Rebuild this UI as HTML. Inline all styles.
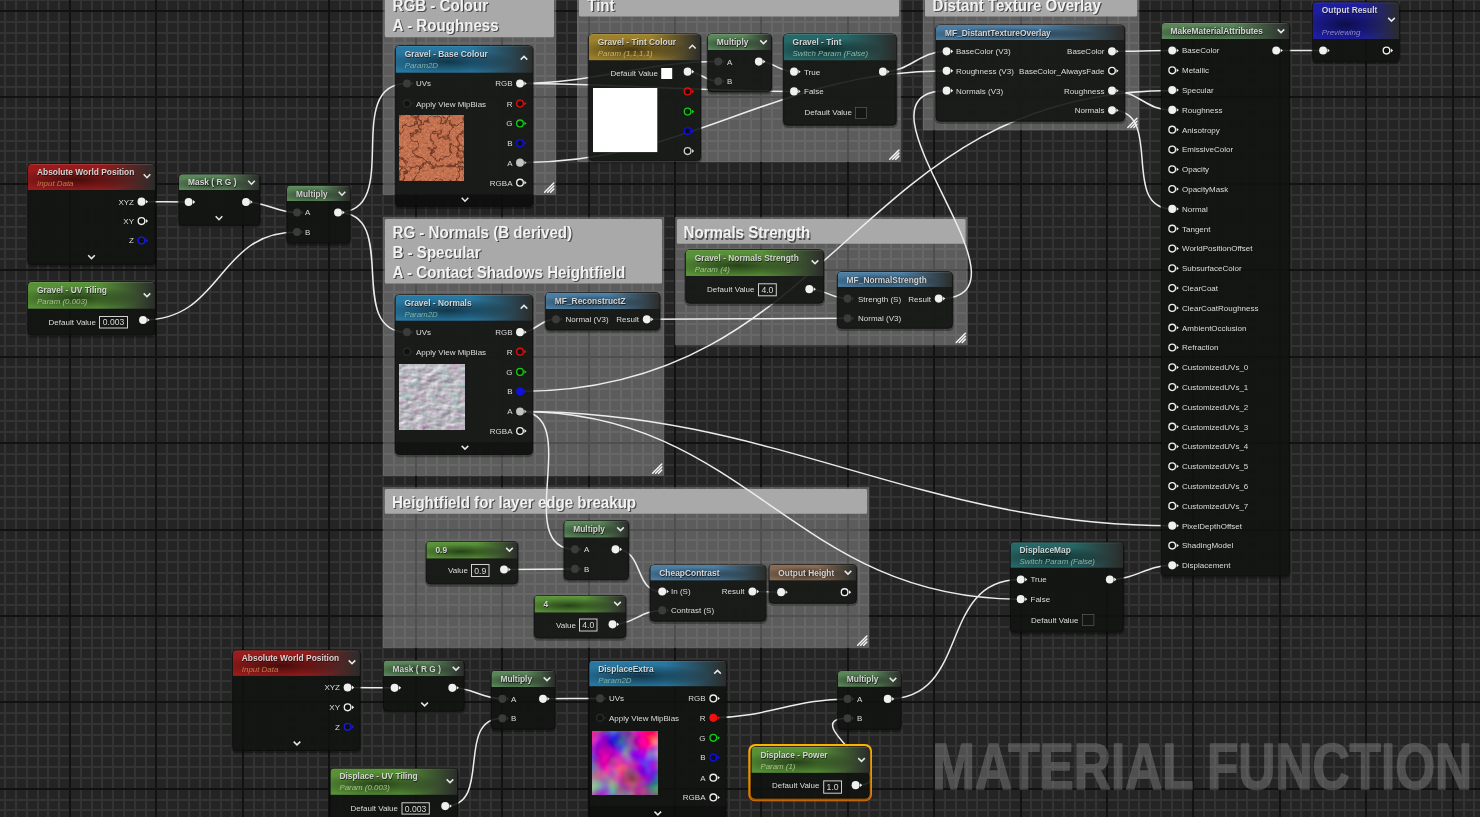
<!DOCTYPE html>
<html><head><meta charset="utf-8"><title>Material Function</title>
<style>html,body{margin:0;padding:0;background:#262626;width:1480px;height:817px;overflow:hidden}
svg text{font-family:"Liberation Sans",sans-serif}
svg{will-change:transform}</style></head>
<body>
<svg width="1480" height="817" viewBox="0 0 1480 817" style="display:block">
<defs><linearGradient id="hg1" x1="0" y1="0" x2="1" y2="0"><stop offset="0" stop-color="#a51c1c"/><stop offset="0.55" stop-color="#a51c1c"/><stop offset="1" stop-color="#2c2e2c"/></linearGradient><radialGradient id="hr1" cx="0.38" cy="0.6" r="0.5" fx="0.38" fy="0.6" gradientTransform="translate(0.38 0.6) scale(1 0.9) translate(-0.38 -0.6)"><stop offset="0" stop-color="#000" stop-opacity="0.55"/><stop offset="1" stop-color="#000" stop-opacity="0"/></radialGradient><clipPath id="hc1"><rect x="28" y="164" width="127" height="100.30000000000001" rx="4"/></clipPath><linearGradient id="hg2" x1="0" y1="0" x2="1" y2="0"><stop offset="0" stop-color="#5f8f5f"/><stop offset="0.55" stop-color="#5f8f5f"/><stop offset="1" stop-color="#2c2e2c"/></linearGradient><radialGradient id="hr2" cx="0.38" cy="0.6" r="0.5" fx="0.38" fy="0.6" gradientTransform="translate(0.38 0.6) scale(1 0.9) translate(-0.38 -0.6)"><stop offset="0" stop-color="#000" stop-opacity="0.55"/><stop offset="1" stop-color="#000" stop-opacity="0"/></radialGradient><clipPath id="hc2"><rect x="179" y="174.3" width="80.5" height="51.0" rx="4"/></clipPath><linearGradient id="hg3" x1="0" y1="0" x2="1" y2="0"><stop offset="0" stop-color="#5f8f5f"/><stop offset="0.55" stop-color="#5f8f5f"/><stop offset="1" stop-color="#2c2e2c"/></linearGradient><radialGradient id="hr3" cx="0.38" cy="0.6" r="0.5" fx="0.38" fy="0.6" gradientTransform="translate(0.38 0.6) scale(1 0.9) translate(-0.38 -0.6)"><stop offset="0" stop-color="#000" stop-opacity="0.55"/><stop offset="1" stop-color="#000" stop-opacity="0"/></radialGradient><clipPath id="hc3"><rect x="287" y="185.6" width="63" height="57.400000000000006" rx="4"/></clipPath><linearGradient id="hg4" x1="0" y1="0" x2="1" y2="0"><stop offset="0" stop-color="#5d9b3a"/><stop offset="0.55" stop-color="#5d9b3a"/><stop offset="1" stop-color="#2c2e2c"/></linearGradient><radialGradient id="hr4" cx="0.38" cy="0.6" r="0.5" fx="0.38" fy="0.6" gradientTransform="translate(0.38 0.6) scale(1 0.9) translate(-0.38 -0.6)"><stop offset="0" stop-color="#000" stop-opacity="0.55"/><stop offset="1" stop-color="#000" stop-opacity="0"/></radialGradient><clipPath id="hc4"><rect x="28" y="282" width="127" height="53" rx="4"/></clipPath><linearGradient id="hg5" x1="0" y1="0" x2="1" y2="0"><stop offset="0" stop-color="#2a80ad"/><stop offset="0.55" stop-color="#2a80ad"/><stop offset="1" stop-color="#2c2e2c"/></linearGradient><radialGradient id="hr5" cx="0.38" cy="0.6" r="0.5" fx="0.38" fy="0.6" gradientTransform="translate(0.38 0.6) scale(1 0.9) translate(-0.38 -0.6)"><stop offset="0" stop-color="#000" stop-opacity="0.55"/><stop offset="1" stop-color="#000" stop-opacity="0"/></radialGradient><clipPath id="hc5"><rect x="395.7" y="45.7" width="137.00000000000006" height="160.7" rx="4"/></clipPath><linearGradient id="hg6" x1="0" y1="0" x2="1" y2="0"><stop offset="0" stop-color="#a98a2c"/><stop offset="0.55" stop-color="#a98a2c"/><stop offset="1" stop-color="#2c2e2c"/></linearGradient><radialGradient id="hr6" cx="0.38" cy="0.6" r="0.5" fx="0.38" fy="0.6" gradientTransform="translate(0.38 0.6) scale(1 0.9) translate(-0.38 -0.6)"><stop offset="0" stop-color="#000" stop-opacity="0.55"/><stop offset="1" stop-color="#000" stop-opacity="0"/></radialGradient><clipPath id="hc6"><rect x="588.8" y="34" width="111.70000000000005" height="126.80000000000001" rx="4"/></clipPath><linearGradient id="hg7" x1="0" y1="0" x2="1" y2="0"><stop offset="0" stop-color="#5f8f5f"/><stop offset="0.55" stop-color="#5f8f5f"/><stop offset="1" stop-color="#2c2e2c"/></linearGradient><radialGradient id="hr7" cx="0.38" cy="0.6" r="0.5" fx="0.38" fy="0.6" gradientTransform="translate(0.38 0.6) scale(1 0.9) translate(-0.38 -0.6)"><stop offset="0" stop-color="#000" stop-opacity="0.55"/><stop offset="1" stop-color="#000" stop-opacity="0"/></radialGradient><clipPath id="hc7"><rect x="707.8" y="34" width="63.700000000000045" height="57.900000000000006" rx="4"/></clipPath><linearGradient id="hg8" x1="0" y1="0" x2="1" y2="0"><stop offset="0" stop-color="#286e6e"/><stop offset="0.55" stop-color="#286e6e"/><stop offset="1" stop-color="#2c2e2c"/></linearGradient><radialGradient id="hr8" cx="0.38" cy="0.6" r="0.5" fx="0.38" fy="0.6" gradientTransform="translate(0.38 0.6) scale(1 0.9) translate(-0.38 -0.6)"><stop offset="0" stop-color="#000" stop-opacity="0.55"/><stop offset="1" stop-color="#000" stop-opacity="0"/></radialGradient><clipPath id="hc8"><rect x="783.6" y="34" width="112.60000000000002" height="91.2" rx="4"/></clipPath><linearGradient id="hg9" x1="0" y1="0" x2="1" y2="0"><stop offset="0" stop-color="#4f85ad"/><stop offset="0.55" stop-color="#4f85ad"/><stop offset="1" stop-color="#2c2e2c"/></linearGradient><radialGradient id="hr9" cx="0.38" cy="0.6" r="0.5" fx="0.38" fy="0.6" gradientTransform="translate(0.38 0.6) scale(1 0.9) translate(-0.38 -0.6)"><stop offset="0" stop-color="#000" stop-opacity="0.55"/><stop offset="1" stop-color="#000" stop-opacity="0"/></radialGradient><clipPath id="hc9"><rect x="936" y="25.1" width="188.5" height="96.1" rx="4"/></clipPath><linearGradient id="hg10" x1="0" y1="0" x2="1" y2="0"><stop offset="0" stop-color="#5f8f5f"/><stop offset="0.55" stop-color="#5f8f5f"/><stop offset="1" stop-color="#2c2e2c"/></linearGradient><radialGradient id="hr10" cx="0.38" cy="0.6" r="0.5" fx="0.38" fy="0.6" gradientTransform="translate(0.38 0.6) scale(1 0.9) translate(-0.38 -0.6)"><stop offset="0" stop-color="#000" stop-opacity="0.55"/><stop offset="1" stop-color="#000" stop-opacity="0"/></radialGradient><clipPath id="hc10"><rect x="1161.5" y="23" width="127.79999999999995" height="552.8" rx="4"/></clipPath><linearGradient id="hg11" x1="0" y1="0" x2="1" y2="0"><stop offset="0" stop-color="#1f1fb0"/><stop offset="0.55" stop-color="#1f1fb0"/><stop offset="1" stop-color="#2c2e2c"/></linearGradient><radialGradient id="hr11" cx="0.38" cy="0.6" r="0.5" fx="0.38" fy="0.6" gradientTransform="translate(0.38 0.6) scale(1 0.9) translate(-0.38 -0.6)"><stop offset="0" stop-color="#000" stop-opacity="0.55"/><stop offset="1" stop-color="#000" stop-opacity="0"/></radialGradient><clipPath id="hc11"><rect x="1312.8" y="2.3" width="86.29999999999995" height="59.300000000000004" rx="4"/></clipPath><linearGradient id="hg12" x1="0" y1="0" x2="1" y2="0"><stop offset="0" stop-color="#2a80ad"/><stop offset="0.55" stop-color="#2a80ad"/><stop offset="1" stop-color="#2c2e2c"/></linearGradient><radialGradient id="hr12" cx="0.38" cy="0.6" r="0.5" fx="0.38" fy="0.6" gradientTransform="translate(0.38 0.6) scale(1 0.9) translate(-0.38 -0.6)"><stop offset="0" stop-color="#000" stop-opacity="0.55"/><stop offset="1" stop-color="#000" stop-opacity="0"/></radialGradient><clipPath id="hc12"><rect x="395.4" y="294.9" width="137.10000000000002" height="159.60000000000002" rx="4"/></clipPath><linearGradient id="hg13" x1="0" y1="0" x2="1" y2="0"><stop offset="0" stop-color="#4f85ad"/><stop offset="0.55" stop-color="#4f85ad"/><stop offset="1" stop-color="#2c2e2c"/></linearGradient><radialGradient id="hr13" cx="0.38" cy="0.6" r="0.5" fx="0.38" fy="0.6" gradientTransform="translate(0.38 0.6) scale(1 0.9) translate(-0.38 -0.6)"><stop offset="0" stop-color="#000" stop-opacity="0.55"/><stop offset="1" stop-color="#000" stop-opacity="0"/></radialGradient><clipPath id="hc13"><rect x="545.8" y="292.6" width="113.90000000000009" height="37.39999999999998" rx="4"/></clipPath><linearGradient id="hg14" x1="0" y1="0" x2="1" y2="0"><stop offset="0" stop-color="#5d9b3a"/><stop offset="0.55" stop-color="#5d9b3a"/><stop offset="1" stop-color="#2c2e2c"/></linearGradient><radialGradient id="hr14" cx="0.38" cy="0.6" r="0.5" fx="0.38" fy="0.6" gradientTransform="translate(0.38 0.6) scale(1 0.9) translate(-0.38 -0.6)"><stop offset="0" stop-color="#000" stop-opacity="0.55"/><stop offset="1" stop-color="#000" stop-opacity="0"/></radialGradient><clipPath id="hc14"><rect x="685.7" y="249.8" width="137.79999999999995" height="53.39999999999998" rx="4"/></clipPath><linearGradient id="hg15" x1="0" y1="0" x2="1" y2="0"><stop offset="0" stop-color="#4f85ad"/><stop offset="0.55" stop-color="#4f85ad"/><stop offset="1" stop-color="#2c2e2c"/></linearGradient><radialGradient id="hr15" cx="0.38" cy="0.6" r="0.5" fx="0.38" fy="0.6" gradientTransform="translate(0.38 0.6) scale(1 0.9) translate(-0.38 -0.6)"><stop offset="0" stop-color="#000" stop-opacity="0.55"/><stop offset="1" stop-color="#000" stop-opacity="0"/></radialGradient><clipPath id="hc15"><rect x="837.6" y="271.8" width="114.79999999999995" height="56.5" rx="4"/></clipPath><linearGradient id="hg16" x1="0" y1="0" x2="1" y2="0"><stop offset="0" stop-color="#5d9b3a"/><stop offset="0.55" stop-color="#5d9b3a"/><stop offset="1" stop-color="#2c2e2c"/></linearGradient><radialGradient id="hr16" cx="0.38" cy="0.6" r="0.5" fx="0.38" fy="0.6" gradientTransform="translate(0.38 0.6) scale(1 0.9) translate(-0.38 -0.6)"><stop offset="0" stop-color="#000" stop-opacity="0.55"/><stop offset="1" stop-color="#000" stop-opacity="0"/></radialGradient><clipPath id="hc16"><rect x="426.4" y="541.5" width="91.20000000000005" height="42.5" rx="4"/></clipPath><linearGradient id="hg17" x1="0" y1="0" x2="1" y2="0"><stop offset="0" stop-color="#5f8f5f"/><stop offset="0.55" stop-color="#5f8f5f"/><stop offset="1" stop-color="#2c2e2c"/></linearGradient><radialGradient id="hr17" cx="0.38" cy="0.6" r="0.5" fx="0.38" fy="0.6" gradientTransform="translate(0.38 0.6) scale(1 0.9) translate(-0.38 -0.6)"><stop offset="0" stop-color="#000" stop-opacity="0.55"/><stop offset="1" stop-color="#000" stop-opacity="0"/></radialGradient><clipPath id="hc17"><rect x="564.2" y="520.5" width="64.19999999999993" height="59.200000000000045" rx="4"/></clipPath><linearGradient id="hg18" x1="0" y1="0" x2="1" y2="0"><stop offset="0" stop-color="#5d9b3a"/><stop offset="0.55" stop-color="#5d9b3a"/><stop offset="1" stop-color="#2c2e2c"/></linearGradient><radialGradient id="hr18" cx="0.38" cy="0.6" r="0.5" fx="0.38" fy="0.6" gradientTransform="translate(0.38 0.6) scale(1 0.9) translate(-0.38 -0.6)"><stop offset="0" stop-color="#000" stop-opacity="0.55"/><stop offset="1" stop-color="#000" stop-opacity="0"/></radialGradient><clipPath id="hc18"><rect x="534.5" y="595.5" width="91.20000000000005" height="42.60000000000002" rx="4"/></clipPath><linearGradient id="hg19" x1="0" y1="0" x2="1" y2="0"><stop offset="0" stop-color="#4f85ad"/><stop offset="0.55" stop-color="#4f85ad"/><stop offset="1" stop-color="#2c2e2c"/></linearGradient><radialGradient id="hr19" cx="0.38" cy="0.6" r="0.5" fx="0.38" fy="0.6" gradientTransform="translate(0.38 0.6) scale(1 0.9) translate(-0.38 -0.6)"><stop offset="0" stop-color="#000" stop-opacity="0.55"/><stop offset="1" stop-color="#000" stop-opacity="0"/></radialGradient><clipPath id="hc19"><rect x="650.3" y="565.1" width="115.60000000000002" height="56.10000000000002" rx="4"/></clipPath><linearGradient id="hg20" x1="0" y1="0" x2="1" y2="0"><stop offset="0" stop-color="#8f7058"/><stop offset="0.55" stop-color="#8f7058"/><stop offset="1" stop-color="#2c2e2c"/></linearGradient><radialGradient id="hr20" cx="0.38" cy="0.6" r="0.5" fx="0.38" fy="0.6" gradientTransform="translate(0.38 0.6) scale(1 0.9) translate(-0.38 -0.6)"><stop offset="0" stop-color="#000" stop-opacity="0.55"/><stop offset="1" stop-color="#000" stop-opacity="0"/></radialGradient><clipPath id="hc20"><rect x="769.3" y="564.5" width="87.10000000000002" height="38.799999999999955" rx="4"/></clipPath><linearGradient id="hg21" x1="0" y1="0" x2="1" y2="0"><stop offset="0" stop-color="#286e6e"/><stop offset="0.55" stop-color="#286e6e"/><stop offset="1" stop-color="#2c2e2c"/></linearGradient><radialGradient id="hr21" cx="0.38" cy="0.6" r="0.5" fx="0.38" fy="0.6" gradientTransform="translate(0.38 0.6) scale(1 0.9) translate(-0.38 -0.6)"><stop offset="0" stop-color="#000" stop-opacity="0.55"/><stop offset="1" stop-color="#000" stop-opacity="0"/></radialGradient><clipPath id="hc21"><rect x="1010.5" y="542.3" width="112.59999999999991" height="89.70000000000005" rx="4"/></clipPath><linearGradient id="hg22" x1="0" y1="0" x2="1" y2="0"><stop offset="0" stop-color="#a51c1c"/><stop offset="0.55" stop-color="#a51c1c"/><stop offset="1" stop-color="#2c2e2c"/></linearGradient><radialGradient id="hr22" cx="0.38" cy="0.6" r="0.5" fx="0.38" fy="0.6" gradientTransform="translate(0.38 0.6) scale(1 0.9) translate(-0.38 -0.6)"><stop offset="0" stop-color="#000" stop-opacity="0.55"/><stop offset="1" stop-color="#000" stop-opacity="0"/></radialGradient><clipPath id="hc22"><rect x="232.8" y="650.3" width="127.09999999999997" height="100.10000000000002" rx="4"/></clipPath><linearGradient id="hg23" x1="0" y1="0" x2="1" y2="0"><stop offset="0" stop-color="#5f8f5f"/><stop offset="0.55" stop-color="#5f8f5f"/><stop offset="1" stop-color="#2c2e2c"/></linearGradient><radialGradient id="hr23" cx="0.38" cy="0.6" r="0.5" fx="0.38" fy="0.6" gradientTransform="translate(0.38 0.6) scale(1 0.9) translate(-0.38 -0.6)"><stop offset="0" stop-color="#000" stop-opacity="0.55"/><stop offset="1" stop-color="#000" stop-opacity="0"/></radialGradient><clipPath id="hc23"><rect x="383.5" y="660.5" width="80.39999999999998" height="50.60000000000002" rx="4"/></clipPath><linearGradient id="hg24" x1="0" y1="0" x2="1" y2="0"><stop offset="0" stop-color="#5f8f5f"/><stop offset="0.55" stop-color="#5f8f5f"/><stop offset="1" stop-color="#2c2e2c"/></linearGradient><radialGradient id="hr24" cx="0.38" cy="0.6" r="0.5" fx="0.38" fy="0.6" gradientTransform="translate(0.38 0.6) scale(1 0.9) translate(-0.38 -0.6)"><stop offset="0" stop-color="#000" stop-opacity="0.55"/><stop offset="1" stop-color="#000" stop-opacity="0"/></radialGradient><clipPath id="hc24"><rect x="491.4" y="670.8" width="63.60000000000002" height="58.30000000000007" rx="4"/></clipPath><linearGradient id="hg25" x1="0" y1="0" x2="1" y2="0"><stop offset="0" stop-color="#5d9b3a"/><stop offset="0.55" stop-color="#5d9b3a"/><stop offset="1" stop-color="#2c2e2c"/></linearGradient><radialGradient id="hr25" cx="0.38" cy="0.6" r="0.5" fx="0.38" fy="0.6" gradientTransform="translate(0.38 0.6) scale(1 0.9) translate(-0.38 -0.6)"><stop offset="0" stop-color="#000" stop-opacity="0.55"/><stop offset="1" stop-color="#000" stop-opacity="0"/></radialGradient><clipPath id="hc25"><rect x="330.4" y="768.4" width="127.10000000000002" height="61.60000000000002" rx="4"/></clipPath><linearGradient id="hg26" x1="0" y1="0" x2="1" y2="0"><stop offset="0" stop-color="#2a80ad"/><stop offset="0.55" stop-color="#2a80ad"/><stop offset="1" stop-color="#2c2e2c"/></linearGradient><radialGradient id="hr26" cx="0.38" cy="0.6" r="0.5" fx="0.38" fy="0.6" gradientTransform="translate(0.38 0.6) scale(1 0.9) translate(-0.38 -0.6)"><stop offset="0" stop-color="#000" stop-opacity="0.55"/><stop offset="1" stop-color="#000" stop-opacity="0"/></radialGradient><clipPath id="hc26"><rect x="589.2" y="660.7" width="136.79999999999995" height="169.29999999999995" rx="4"/></clipPath><linearGradient id="hg27" x1="0" y1="0" x2="1" y2="0"><stop offset="0" stop-color="#5f8f5f"/><stop offset="0.55" stop-color="#5f8f5f"/><stop offset="1" stop-color="#2c2e2c"/></linearGradient><radialGradient id="hr27" cx="0.38" cy="0.6" r="0.5" fx="0.38" fy="0.6" gradientTransform="translate(0.38 0.6) scale(1 0.9) translate(-0.38 -0.6)"><stop offset="0" stop-color="#000" stop-opacity="0.55"/><stop offset="1" stop-color="#000" stop-opacity="0"/></radialGradient><clipPath id="hc27"><rect x="837.8" y="671.1" width="63.30000000000007" height="58.19999999999993" rx="4"/></clipPath><linearGradient id="selg" x1="0" y1="0" x2="0" y2="1"><stop offset="0" stop-color="#f7b400"/><stop offset="1" stop-color="#e57a00"/></linearGradient><linearGradient id="hg28" x1="0" y1="0" x2="1" y2="0"><stop offset="0" stop-color="#5d9b3a"/><stop offset="0.55" stop-color="#5d9b3a"/><stop offset="1" stop-color="#2c2e2c"/></linearGradient><radialGradient id="hr28" cx="0.38" cy="0.6" r="0.5" fx="0.38" fy="0.6" gradientTransform="translate(0.38 0.6) scale(1 0.9) translate(-0.38 -0.6)"><stop offset="0" stop-color="#000" stop-opacity="0.55"/><stop offset="1" stop-color="#000" stop-opacity="0"/></radialGradient><clipPath id="hc28"><rect x="751.4" y="746.8" width="117.70000000000005" height="51.10000000000002" rx="4"/></clipPath>
<filter id="fgravel" x="0" y="0" width="1" height="1" color-interpolation-filters="sRGB">
 <feTurbulence type="fractalNoise" baseFrequency="0.06" numOctaves="4" seed="7" result="n"/>
 <feColorMatrix in="n" type="matrix" values="0 0 0 0 0  0 0 0 0 0  0 0 0 0 0  1 0 0 0 0" result="na"/>
 <feComponentTransfer in="na" result="crack"><feFuncA type="table" tableValues="0 0 0 0 0 0 0 0 0 0 0.75 0 0 0 0 0 0 0 0 0 0"/></feComponentTransfer>
 <feFlood flood-color="#4e2414" result="cc"/>
 <feComposite in="cc" in2="crack" operator="in" result="cracks"/>
 <feTurbulence type="fractalNoise" baseFrequency="0.5" numOctaves="2" seed="2" result="n2"/>
 <feColorMatrix in="n2" type="matrix" values="0 0 0 0 0.93  0 0 0 0 0.62  0 0 0 0 0.48  1.5 0 0 0 -0.72" result="spots"/>
 <feTurbulence type="fractalNoise" baseFrequency="0.4" numOctaves="2" seed="9" result="n3"/>
 <feColorMatrix in="n3" type="matrix" values="0 0 0 0 0.45  0 0 0 0 0.22  0 0 0 0 0.14  1.4 0 0 0 -0.72" result="dark"/>
 <feFlood flood-color="#c4714f" result="base"/>
 <feMerge><feMergeNode in="base"/><feMergeNode in="spots"/><feMergeNode in="dark"/><feMergeNode in="cracks"/></feMerge>
</filter>
<filter id="fnormal" x="0" y="0" width="1" height="1" color-interpolation-filters="sRGB">
 <feTurbulence type="fractalNoise" baseFrequency="0.1 0.16" numOctaves="3" seed="11" result="n"/>
 <feColorMatrix in="n" type="matrix" values="0.33 0.33 0.33 0 0  0.33 0.33 0.33 0 0  0.33 0.33 0.33 0 0  0 0 0 0 1" result="g"/>
 <feConvolveMatrix in="g" order="3" kernelMatrix="1.6 0 0  0 0 0  0 0 -1.6" divisor="1" bias="0.5" preserveAlpha="true" result="emb"/>
 <feColorMatrix in="emb" type="matrix" values="0.55 0 0 0 0.45  0 0.55 0 0 0.44  0 0 0.55 0 0.47  0 0 0 0 1" result="e2"/>
 <feColorMatrix in="n" type="matrix" values="0 0 0 0 0.8  0 0 0 0 0.45  0 0 0 0 0.75  1.6 0 0 0 -0.9" result="pink"/>
 <feColorMatrix in="n" type="matrix" values="0 0 0 0 0.55  0 0 0 0 0.85  0 0 0 0 0.75  0 1.6 0 0 -0.9" result="grn"/>
 <feMerge><feMergeNode in="e2"/><feMergeNode in="pink"/><feMergeNode in="grn"/></feMerge>
</filter>
<filter id="fdisp" x="0" y="0" width="1" height="1" color-interpolation-filters="sRGB">
 <feTurbulence type="fractalNoise" baseFrequency="0.03" numOctaves="3" seed="21" result="n"/>
 <feColorMatrix in="n" type="matrix" values="1.5 -0.6 0 0 0.25  -0.2 2.0 -0.3 0 -0.55  0 -0.3 1.2 0 0.2  0 0 0 0 1"/>
</filter>
</defs>
<rect x="0" y="0" width="1480" height="817" fill="#242424"/>
<path d="M5 0V817M16 0V817M27 0V817M38 0V817M48 0V817M59 0V817M81 0V817M92 0V817M102 0V817M113 0V817M124 0V817M135 0V817M146 0V817M167 0V817M178 0V817M189 0V817M200 0V817M210 0V817M221 0V817M232 0V817M254 0V817M264 0V817M275 0V817M286 0V817M297 0V817M308 0V817M318 0V817M340 0V817M351 0V817M362 0V817M372 0V817M383 0V817M394 0V817M405 0V817M426 0V817M437 0V817M448 0V817M459 0V817M470 0V817M480 0V817M491 0V817M513 0V817M524 0V817M535 0V817M545 0V817M556 0V817M567 0V817M578 0V817M599 0V817M610 0V817M621 0V817M632 0V817M643 0V817M653 0V817M664 0V817M686 0V817M697 0V817M707 0V817M718 0V817M729 0V817M740 0V817M751 0V817M772 0V817M783 0V817M794 0V817M805 0V817M815 0V817M826 0V817M837 0V817M859 0V817M869 0V817M880 0V817M891 0V817M902 0V817M913 0V817M923 0V817M945 0V817M956 0V817M967 0V817M977 0V817M988 0V817M999 0V817M1010 0V817M1031 0V817M1042 0V817M1053 0V817M1064 0V817M1075 0V817M1085 0V817M1096 0V817M1118 0V817M1129 0V817M1139 0V817M1150 0V817M1161 0V817M1172 0V817M1183 0V817M1204 0V817M1215 0V817M1226 0V817M1237 0V817M1247 0V817M1258 0V817M1269 0V817M1291 0V817M1301 0V817M1312 0V817M1323 0V817M1334 0V817M1345 0V817M1355 0V817M1377 0V817M1388 0V817M1399 0V817M1410 0V817M1420 0V817M1431 0V817M1442 0V817M1464 0V817M1474 0V817M0 0H1480M0 22H1480M0 33H1480M0 43H1480M0 54H1480M0 65H1480M0 76H1480M0 87H1480M0 108H1480M0 119H1480M0 130H1480M0 141H1480M0 151H1480M0 162H1480M0 173H1480M0 195H1480M0 205H1480M0 216H1480M0 227H1480M0 238H1480M0 249H1480M0 259H1480M0 281H1480M0 292H1480M0 303H1480M0 313H1480M0 324H1480M0 335H1480M0 346H1480M0 367H1480M0 378H1480M0 389H1480M0 400H1480M0 411H1480M0 421H1480M0 432H1480M0 454H1480M0 465H1480M0 476H1480M0 486H1480M0 497H1480M0 508H1480M0 519H1480M0 540H1480M0 551H1480M0 562H1480M0 573H1480M0 584H1480M0 594H1480M0 605H1480M0 627H1480M0 638H1480M0 648H1480M0 659H1480M0 670H1480M0 681H1480M0 692H1480M0 713H1480M0 724H1480M0 735H1480M0 746H1480M0 756H1480M0 767H1480M0 778H1480M0 800H1480M0 810H1480" stroke="#333333" stroke-width="2" fill="none" shape-rendering="crispEdges"/>
<path d="M70 0V817M156 0V817M243 0V817M329 0V817M416 0V817M502 0V817M589 0V817M675 0V817M761 0V817M848 0V817M934 0V817M1021 0V817M1107 0V817M1193 0V817M1280 0V817M1366 0V817M1453 0V817M0 11H1480M0 97H1480M0 184H1480M0 270H1480M0 357H1480M0 443H1480M0 530H1480M0 616H1480M0 702H1480M0 789H1480" stroke="#121212" stroke-width="2" fill="none" shape-rendering="crispEdges"/>
<g opacity="0.36"><text x="932.2" y="788.8" font-family="Liberation Sans" font-weight="bold" font-size="64.5" fill="#9c9c9c" stroke="#9c9c9c" stroke-width="1.6" stroke-linejoin="round" textLength="540" lengthAdjust="spacingAndGlyphs">MATERIAL FUNCTION</text></g>
<rect x="382.80" y="-11.00" width="173.20" height="205.90" fill="#ffffff" fill-opacity="0.26"/>
<rect x="384.80" y="-9.00" width="169.20" height="46.30" rx="1.5" fill="#a9a9a9"/>
<text x="393.8" y="12.0" font-family="Liberation Sans" font-weight="bold" font-size="16" fill="#000" fill-opacity="0.55" textLength="95.6" lengthAdjust="spacingAndGlyphs">RGB - Colour</text>
<text x="392.6" y="10.8" font-family="Liberation Sans" font-weight="bold" font-size="16" fill="#f2f2f2" textLength="95.6" lengthAdjust="spacingAndGlyphs">RGB - Colour</text>
<text x="393.8" y="32.0" font-family="Liberation Sans" font-weight="bold" font-size="16" fill="#000" fill-opacity="0.55" textLength="106.0" lengthAdjust="spacingAndGlyphs">A - Roughness</text>
<text x="392.6" y="30.8" font-family="Liberation Sans" font-weight="bold" font-size="16" fill="#f2f2f2" textLength="106.0" lengthAdjust="spacingAndGlyphs">A - Roughness</text>
<path d="M544.60 192.20L553.80 183.00M547.60 192.20L553.80 186.00M550.60 192.20L553.80 189.00" stroke="#f4f4f4" stroke-width="1.5" fill="none" stroke-linecap="round"/>
<rect x="577.00" y="-11.00" width="324.10" height="173.00" fill="#ffffff" fill-opacity="0.26"/>
<rect x="579.00" y="-9.00" width="320.10" height="25.60" rx="1.5" fill="#a9a9a9"/>
<text x="588.4000000000001" y="12.0" font-family="Liberation Sans" font-weight="bold" font-size="16" fill="#000" fill-opacity="0.55" textLength="27.4" lengthAdjust="spacingAndGlyphs">Tint</text>
<text x="587.2" y="10.8" font-family="Liberation Sans" font-weight="bold" font-size="16" fill="#f2f2f2" textLength="27.4" lengthAdjust="spacingAndGlyphs">Tint</text>
<path d="M889.70 159.30L898.90 150.10M892.70 159.30L898.90 153.10M895.70 159.30L898.90 156.10" stroke="#f4f4f4" stroke-width="1.5" fill="none" stroke-linecap="round"/>
<rect x="923.00" y="-11.00" width="216.20" height="141.20" fill="#ffffff" fill-opacity="0.26"/>
<rect x="925.00" y="-9.00" width="212.20" height="25.60" rx="1.5" fill="#a9a9a9"/>
<text x="933.7" y="12.1" font-family="Liberation Sans" font-weight="bold" font-size="16" fill="#000" fill-opacity="0.55" textLength="168.4" lengthAdjust="spacingAndGlyphs">Distant Texture Overlay</text>
<text x="932.5" y="10.9" font-family="Liberation Sans" font-weight="bold" font-size="16" fill="#f2f2f2" textLength="168.4" lengthAdjust="spacingAndGlyphs">Distant Texture Overlay</text>
<path d="M1127.80 127.50L1137.00 118.30M1130.80 127.50L1137.00 121.30M1133.80 127.50L1137.00 124.30" stroke="#f4f4f4" stroke-width="1.5" fill="none" stroke-linecap="round"/>
<rect x="382.90" y="216.90" width="281.10" height="259.00" fill="#ffffff" fill-opacity="0.26"/>
<rect x="384.90" y="218.90" width="277.10" height="64.70" rx="1.5" fill="#a9a9a9"/>
<text x="393.7" y="239.2" font-family="Liberation Sans" font-weight="bold" font-size="16" fill="#000" fill-opacity="0.55" textLength="179.6" lengthAdjust="spacingAndGlyphs">RG - Normals (B derived)</text>
<text x="392.5" y="238.0" font-family="Liberation Sans" font-weight="bold" font-size="16" fill="#f2f2f2" textLength="179.6" lengthAdjust="spacingAndGlyphs">RG - Normals (B derived)</text>
<text x="393.7" y="259.2" font-family="Liberation Sans" font-weight="bold" font-size="16" fill="#000" fill-opacity="0.55" textLength="88.1" lengthAdjust="spacingAndGlyphs">B - Specular</text>
<text x="392.5" y="258.0" font-family="Liberation Sans" font-weight="bold" font-size="16" fill="#f2f2f2" textLength="88.1" lengthAdjust="spacingAndGlyphs">B - Specular</text>
<text x="393.7" y="279.2" font-family="Liberation Sans" font-weight="bold" font-size="16" fill="#000" fill-opacity="0.55" textLength="232.7" lengthAdjust="spacingAndGlyphs">A - Contact Shadows Heightfield</text>
<text x="392.5" y="278.0" font-family="Liberation Sans" font-weight="bold" font-size="16" fill="#f2f2f2" textLength="232.7" lengthAdjust="spacingAndGlyphs">A - Contact Shadows Heightfield</text>
<path d="M652.60 473.20L661.80 464.00M655.60 473.20L661.80 467.00M658.60 473.20L661.80 470.00" stroke="#f4f4f4" stroke-width="1.5" fill="none" stroke-linecap="round"/>
<rect x="674.90" y="216.90" width="292.70" height="128.30" fill="#ffffff" fill-opacity="0.26"/>
<rect x="676.90" y="218.90" width="288.70" height="24.80" rx="1.5" fill="#a9a9a9"/>
<text x="684.8000000000001" y="239.5" font-family="Liberation Sans" font-weight="bold" font-size="16" fill="#000" fill-opacity="0.55" textLength="126.7" lengthAdjust="spacingAndGlyphs">Normals Strength</text>
<text x="683.6" y="238.3" font-family="Liberation Sans" font-weight="bold" font-size="16" fill="#f2f2f2" textLength="126.7" lengthAdjust="spacingAndGlyphs">Normals Strength</text>
<path d="M956.20 342.50L965.40 333.30M959.20 342.50L965.40 336.30M962.20 342.50L965.40 339.30" stroke="#f4f4f4" stroke-width="1.5" fill="none" stroke-linecap="round"/>
<rect x="382.80" y="487.10" width="486.30" height="160.80" fill="#ffffff" fill-opacity="0.26"/>
<rect x="384.80" y="489.10" width="482.30" height="24.70" rx="1.5" fill="#a9a9a9"/>
<text x="393.09999999999997" y="508.9" font-family="Liberation Sans" font-weight="bold" font-size="16" fill="#000" fill-opacity="0.55" textLength="244.2" lengthAdjust="spacingAndGlyphs">Heightfield for layer edge breakup</text>
<text x="391.9" y="507.7" font-family="Liberation Sans" font-weight="bold" font-size="16" fill="#f2f2f2" textLength="244.2" lengthAdjust="spacingAndGlyphs">Heightfield for layer edge breakup</text>
<path d="M857.70 645.20L866.90 636.00M860.70 645.20L866.90 639.00M863.70 645.20L866.90 642.00" stroke="#f4f4f4" stroke-width="1.5" fill="none" stroke-linecap="round"/>
<path d="M141.5 201.7C157.3 201.7 172.8 202.0 188.6 202.0" stroke="#ececec" stroke-width="1.5" fill="none"/>
<path d="M246.0 202.0C266.5 202.0 276.5 212.5 297.0 212.5" stroke="#ececec" stroke-width="1.5" fill="none"/>
<path d="M143.0 320.0C223.7 320.0 216.3 232.0 297.0 232.0" stroke="#ececec" stroke-width="1.5" fill="none"/>
<path d="M338.0 212.5C404.0 212.5 341.0 83.5 407.0 83.5" stroke="#ececec" stroke-width="1.5" fill="none"/>
<path d="M338.0 212.5C400.9 212.5 344.1 332.2 407.0 332.2" stroke="#ececec" stroke-width="1.5" fill="none"/>
<path d="M520.0 83.5C593.4 83.5 644.8 61.6 718.2 61.6" stroke="#ececec" stroke-width="1.5" fill="none"/>
<path d="M520.0 83.5C614.0 83.5 700.0 91.4 794.0 91.4" stroke="#ececec" stroke-width="1.5" fill="none"/>
<path d="M687.6 71.7C701.0 71.7 704.8 81.3 718.2 81.3" stroke="#ececec" stroke-width="1.5" fill="none"/>
<path d="M758.8 61.6C773.9 61.6 778.9 71.7 794.0 71.7" stroke="#ececec" stroke-width="1.5" fill="none"/>
<path d="M520.0 162.7C692.8 162.7 773.8 70.8 946.6 70.8" stroke="#ececec" stroke-width="1.5" fill="none"/>
<path d="M882.9 71.7C910.9 71.7 918.6 51.3 946.6 51.3" stroke="#ececec" stroke-width="1.5" fill="none"/>
<path d="M938.7 298.6C1048.7 298.6 836.6 90.7 946.6 90.7" stroke="#ececec" stroke-width="1.5" fill="none"/>
<path d="M1112.0 51.3C1132.3 51.3 1151.9 50.5 1172.2 50.5" stroke="#ececec" stroke-width="1.5" fill="none"/>
<path d="M1112.0 90.7C1138.6 90.7 1145.6 110.3 1172.2 110.3" stroke="#ececec" stroke-width="1.5" fill="none"/>
<path d="M1112.0 110.3C1165.0 110.3 1119.2 209.0 1172.2 209.0" stroke="#ececec" stroke-width="1.5" fill="none"/>
<path d="M520.0 391.5C837.8 391.5 854.4 90.4 1172.2 90.4" stroke="#ececec" stroke-width="1.5" fill="none"/>
<path d="M1276.2 50.5C1291.8 50.5 1307.5 50.5 1323.1 50.5" stroke="#ececec" stroke-width="1.5" fill="none"/>
<path d="M520.0 332.2C536.3 332.2 539.7 319.3 556.0 319.3" stroke="#ececec" stroke-width="1.5" fill="none"/>
<path d="M646.8 319.3C714.1 319.3 780.3 318.3 847.6 318.3" stroke="#ececec" stroke-width="1.5" fill="none"/>
<path d="M809.3 289.2C825.2 289.2 831.7 298.6 847.6 298.6" stroke="#ececec" stroke-width="1.5" fill="none"/>
<path d="M520.0 411.5C584.3 411.5 510.7 549.3 575.0 549.3" stroke="#ececec" stroke-width="1.5" fill="none"/>
<path d="M520.0 411.5C749.5 411.5 791.2 599.2 1020.7 599.2" stroke="#ececec" stroke-width="1.5" fill="none"/>
<path d="M520.0 411.5C775.5 411.5 916.7 525.7 1172.2 525.7" stroke="#ececec" stroke-width="1.5" fill="none"/>
<path d="M504.0 569.5C527.9 569.5 551.1 568.9 575.0 568.9" stroke="#ececec" stroke-width="1.5" fill="none"/>
<path d="M615.5 549.3C645.1 549.3 632.6 591.5 662.2 591.5" stroke="#ececec" stroke-width="1.5" fill="none"/>
<path d="M612.5 624.3C633.7 624.3 641.0 610.4 662.2 610.4" stroke="#ececec" stroke-width="1.5" fill="none"/>
<path d="M752.4 591.5C762.2 591.5 771.3 592.2 781.1 592.2" stroke="#ececec" stroke-width="1.5" fill="none"/>
<path d="M347.6 687.5C363.4 687.5 378.8 687.8 394.6 687.8" stroke="#ececec" stroke-width="1.5" fill="none"/>
<path d="M452.3 687.8C472.7 687.8 482.0 698.8 502.4 698.8" stroke="#ececec" stroke-width="1.5" fill="none"/>
<path d="M445.2 806.1C493.5 806.1 454.1 718.3 502.4 718.3" stroke="#ececec" stroke-width="1.5" fill="none"/>
<path d="M543.0 698.8C562.1 698.8 580.9 698.4 600.0 698.4" stroke="#ececec" stroke-width="1.5" fill="none"/>
<path d="M713.3 717.8C764.4 717.8 796.5 698.9 847.6 698.9" stroke="#ececec" stroke-width="1.5" fill="none"/>
<path d="M855.6 785.2C910.6 785.2 792.6 718.3 847.6 718.3" stroke="#ececec" stroke-width="1.5" fill="none"/>
<path d="M887.7 698.9C971.8 698.9 936.6 579.5 1020.7 579.5" stroke="#ececec" stroke-width="1.5" fill="none"/>
<path d="M1109.8 579.5C1135.4 579.5 1146.6 565.2 1172.2 565.2" stroke="#ececec" stroke-width="1.5" fill="none"/>
<rect x="26.5" y="163.5" width="130" height="103.50000000000001" rx="5.5" fill="#000" fill-opacity="0.3"/>
<rect x="28" y="164" width="127" height="100.30000000000001" rx="4" fill="#121412" fill-opacity="0.84" stroke="#0c0c0c" stroke-opacity="0.8" stroke-width="1"/>
<g clip-path="url(#hc1)">
<rect x="28" y="164" width="127" height="26" fill="url(#hg1)" fill-opacity="0.92"/>
<rect x="28" y="164" width="127" height="26" fill="url(#hr1)"/>
<rect x="28" y="164" width="127" height="1" fill="#fff" fill-opacity="0.12"/>
</g>
<text x="37.5" y="175.8" font-family="Liberation Sans" font-weight="bold" font-size="9" fill="#000" fill-opacity="0.6" textLength="97.4" lengthAdjust="spacingAndGlyphs">Absolute World Position</text>
<text x="37.0" y="175.0" font-family="Liberation Sans" font-weight="bold" font-size="9" fill="#d4d4d4" textLength="97.4" lengthAdjust="spacingAndGlyphs">Absolute World Position</text>
<text x="37.0" y="185.8" font-family="Liberation Sans" font-style="italic" font-size="8" fill="#c47a50" textLength="36.5" lengthAdjust="spacingAndGlyphs">Input Data</text>
<path d="M143.7 174.3L147.0 177.7L150.3 174.3" stroke="#e8e8e8" stroke-width="1.5" fill="none"/>
<ellipse cx="141.5" cy="201.7" rx="3.95" ry="4.1" fill="#f0f0f0"/><path d="M145.90 199.80L148.10 201.70L145.90 203.60Z" fill="#f0f0f0"/>
<text x="134.0" y="204.6" font-family="Liberation Sans" font-size="8.0" fill="#dcdcdc" text-anchor="end" textLength="15.6" lengthAdjust="spacingAndGlyphs">XYZ</text>
<ellipse cx="141.5" cy="221" rx="3.3" ry="3.45" fill="#101010" stroke="#f0f0f0" stroke-width="1.35"/><path d="M145.90 219.10L148.10 221.00L145.90 222.90Z" fill="#f0f0f0"/>
<text x="134.0" y="223.9" font-family="Liberation Sans" font-size="8.0" fill="#dcdcdc" text-anchor="end" textLength="10.7" lengthAdjust="spacingAndGlyphs">XY</text>
<ellipse cx="141.5" cy="240.5" rx="3.3" ry="3.45" fill="#101010" stroke="#1a1ae6" stroke-width="1.35"/><path d="M145.90 238.60L148.10 240.50L145.90 242.40Z" fill="#1a1ae6"/>
<text x="134.0" y="243.4" font-family="Liberation Sans" font-size="8.0" fill="#dcdcdc" text-anchor="end" textLength="4.9" lengthAdjust="spacingAndGlyphs">Z</text>
<path d="M88.2 255.3L91.5 258.6L94.8 255.3" stroke="#e8e8e8" stroke-width="1.5" fill="none"/>
<rect x="177.5" y="173.8" width="83.5" height="54.2" rx="5.5" fill="#000" fill-opacity="0.3"/>
<rect x="179" y="174.3" width="80.5" height="51.0" rx="4" fill="#121412" fill-opacity="0.84" stroke="#0c0c0c" stroke-opacity="0.8" stroke-width="1"/>
<g clip-path="url(#hc2)">
<rect x="179" y="174.3" width="80.5" height="15.699999999999989" fill="url(#hg2)" fill-opacity="0.92"/>
<rect x="179" y="174.3" width="80.5" height="15.699999999999989" fill="url(#hr2)"/>
<rect x="179" y="174.3" width="80.5" height="1" fill="#fff" fill-opacity="0.12"/>
</g>
<text x="188.5" y="186.2" font-family="Liberation Sans" font-weight="bold" font-size="9" fill="#000" fill-opacity="0.6" textLength="48.5" lengthAdjust="spacingAndGlyphs">Mask ( R G )</text>
<text x="188.0" y="185.3" font-family="Liberation Sans" font-weight="bold" font-size="9" fill="#d4d4d4" textLength="48.5" lengthAdjust="spacingAndGlyphs">Mask ( R G )</text>
<path d="M248.2 180.8L251.5 184.2L254.8 180.8" stroke="#e8e8e8" stroke-width="1.5" fill="none"/>
<ellipse cx="188.6" cy="202" rx="3.95" ry="4.1" fill="#f0f0f0"/><path d="M193.00 200.10L195.20 202.00L193.00 203.90Z" fill="#f0f0f0"/>
<ellipse cx="246" cy="202" rx="3.95" ry="4.1" fill="#f0f0f0"/><path d="M250.40 200.10L252.60 202.00L250.40 203.90Z" fill="#f0f0f0"/>
<path d="M215.7 216.3L219.0 219.7L222.3 216.3" stroke="#e8e8e8" stroke-width="1.5" fill="none"/>
<rect x="285.5" y="185.1" width="66" height="60.60000000000001" rx="5.5" fill="#000" fill-opacity="0.3"/>
<rect x="287" y="185.6" width="63" height="57.400000000000006" rx="4" fill="#121412" fill-opacity="0.84" stroke="#0c0c0c" stroke-opacity="0.8" stroke-width="1"/>
<g clip-path="url(#hc3)">
<rect x="287" y="185.6" width="63" height="15.400000000000006" fill="url(#hg3)" fill-opacity="0.92"/>
<rect x="287" y="185.6" width="63" height="15.400000000000006" fill="url(#hr3)"/>
<rect x="287" y="185.6" width="63" height="1" fill="#fff" fill-opacity="0.12"/>
</g>
<text x="296.5" y="197.3" font-family="Liberation Sans" font-weight="bold" font-size="9" fill="#000" fill-opacity="0.6" textLength="31.7" lengthAdjust="spacingAndGlyphs">Multiply</text>
<text x="296.0" y="196.5" font-family="Liberation Sans" font-weight="bold" font-size="9" fill="#d4d4d4" textLength="31.7" lengthAdjust="spacingAndGlyphs">Multiply</text>
<path d="M338.7 191.8L342.0 195.2L345.3 191.8" stroke="#e8e8e8" stroke-width="1.5" fill="none"/>
<ellipse cx="297" cy="212.5" rx="3.95" ry="4.1" fill="#3a3b3a"/><path d="M301.40 210.60L303.60 212.50L301.40 214.40Z" fill="#2e2f2e"/>
<text x="305.0" y="215.4" font-family="Liberation Sans" font-size="8.0" fill="#dcdcdc" text-anchor="start" textLength="5.3" lengthAdjust="spacingAndGlyphs">A</text>
<ellipse cx="297" cy="232" rx="3.95" ry="4.1" fill="#3a3b3a"/><path d="M301.40 230.10L303.60 232.00L301.40 233.90Z" fill="#2e2f2e"/>
<text x="305.0" y="234.9" font-family="Liberation Sans" font-size="8.0" fill="#dcdcdc" text-anchor="start" textLength="5.3" lengthAdjust="spacingAndGlyphs">B</text>
<ellipse cx="338" cy="212.5" rx="3.95" ry="4.1" fill="#f0f0f0"/><path d="M342.40 210.60L344.60 212.50L342.40 214.40Z" fill="#f0f0f0"/>
<rect x="26.5" y="281.5" width="130" height="56.2" rx="5.5" fill="#000" fill-opacity="0.3"/>
<rect x="28" y="282" width="127" height="53" rx="4" fill="#121412" fill-opacity="0.84" stroke="#0c0c0c" stroke-opacity="0.8" stroke-width="1"/>
<g clip-path="url(#hc4)">
<rect x="28" y="282" width="127" height="26.69999999999999" fill="url(#hg4)" fill-opacity="0.92"/>
<rect x="28" y="282" width="127" height="26.69999999999999" fill="url(#hr4)"/>
<rect x="28" y="282" width="127" height="1" fill="#fff" fill-opacity="0.12"/>
</g>
<text x="37.5" y="293.8" font-family="Liberation Sans" font-weight="bold" font-size="9" fill="#000" fill-opacity="0.6" textLength="69.9" lengthAdjust="spacingAndGlyphs">Gravel - UV Tiling</text>
<text x="37.0" y="293.0" font-family="Liberation Sans" font-weight="bold" font-size="9" fill="#d4d4d4" textLength="69.9" lengthAdjust="spacingAndGlyphs">Gravel - UV Tiling</text>
<text x="37.0" y="303.8" font-family="Liberation Sans" font-style="italic" font-size="8" fill="#a6c48a" textLength="50.5" lengthAdjust="spacingAndGlyphs">Param (0.003)</text>
<path d="M143.7 293.4L147.0 296.6L150.3 293.4" stroke="#e8e8e8" stroke-width="1.5" fill="none"/>
<text x="96.0" y="325.0" font-family="Liberation Sans" font-size="8.0" fill="#dcdcdc" text-anchor="end" textLength="47.4" lengthAdjust="spacingAndGlyphs">Default Value</text>
<rect x="99.5" y="316.5" width="28.0" height="11.5" fill="none" stroke="#d0d0d0" stroke-width="1"/>
<text x="113.5" y="325.4" font-family="Liberation Sans" font-size="8.6" fill="#d8d8d8" text-anchor="middle" textLength="21.5" lengthAdjust="spacingAndGlyphs">0.003</text>
<ellipse cx="143" cy="320" rx="3.95" ry="4.1" fill="#f0f0f0"/><path d="M147.40 318.10L149.60 320.00L147.40 321.90Z" fill="#f0f0f0"/>
<rect x="394.2" y="45.2" width="140.00000000000006" height="163.89999999999998" rx="5.5" fill="#000" fill-opacity="0.3"/>
<rect x="395.7" y="45.7" width="137.00000000000006" height="160.7" rx="4" fill="#121412" fill-opacity="0.84" stroke="#0c0c0c" stroke-opacity="0.8" stroke-width="1"/>
<g clip-path="url(#hc5)">
<rect x="395.7" y="45.7" width="137.00000000000006" height="27.0" fill="url(#hg5)" fill-opacity="0.92"/>
<rect x="395.7" y="45.7" width="137.00000000000006" height="27.0" fill="url(#hr5)"/>
<rect x="395.7" y="45.7" width="137.00000000000006" height="1" fill="#fff" fill-opacity="0.12"/>
<rect x="395.7" y="194" width="137.00000000000006" height="12.400000000000006" fill="#000" fill-opacity="0.25"/>
</g>
<text x="405.2" y="57.5" font-family="Liberation Sans" font-weight="bold" font-size="9" fill="#000" fill-opacity="0.6" textLength="83.1" lengthAdjust="spacingAndGlyphs">Gravel - Base Colour</text>
<text x="404.7" y="56.7" font-family="Liberation Sans" font-weight="bold" font-size="9" fill="#d4d4d4" textLength="83.1" lengthAdjust="spacingAndGlyphs">Gravel - Base Colour</text>
<text x="404.7" y="67.5" font-family="Liberation Sans" font-style="italic" font-size="8" fill="#7fb3a8" textLength="33.4" lengthAdjust="spacingAndGlyphs">Param2D</text>
<path d="M520.7 59.6L524.0 56.4L527.3 59.6" stroke="#e8e8e8" stroke-width="1.5" fill="none"/>
<ellipse cx="407" cy="83.5" rx="3.95" ry="4.1" fill="#3a3b3a"/><path d="M411.40 81.60L413.60 83.50L411.40 85.40Z" fill="#2e2f2e"/>
<text x="416.0" y="86.4" font-family="Liberation Sans" font-size="8.0" fill="#dcdcdc" text-anchor="start" textLength="15.1" lengthAdjust="spacingAndGlyphs">UVs</text>
<ellipse cx="407" cy="103.6" rx="3.4" ry="3.5" fill="#111" stroke="#2c2c2c" stroke-width="1.2"/><path d="M411.40 101.70L413.60 103.60L411.40 105.50Z" fill="#262626"/>
<text x="416.0" y="106.5" font-family="Liberation Sans" font-size="8.0" fill="#dcdcdc" text-anchor="start" textLength="70.1" lengthAdjust="spacingAndGlyphs">Apply View MipBias</text>
<ellipse cx="520" cy="83.5" rx="3.95" ry="4.1" fill="#f0f0f0"/><path d="M524.40 81.60L526.60 83.50L524.40 85.40Z" fill="#f0f0f0"/>
<text x="512.5" y="86.4" font-family="Liberation Sans" font-size="8.0" fill="#dcdcdc" text-anchor="end" textLength="17.3" lengthAdjust="spacingAndGlyphs">RGB</text>
<ellipse cx="520" cy="103.6" rx="3.3" ry="3.45" fill="#101010" stroke="#e01010" stroke-width="1.35"/><path d="M524.40 101.70L526.60 103.60L524.40 105.50Z" fill="#e01010"/>
<text x="512.5" y="106.5" font-family="Liberation Sans" font-size="8.0" fill="#dcdcdc" text-anchor="end" textLength="5.8" lengthAdjust="spacingAndGlyphs">R</text>
<ellipse cx="520" cy="123.4" rx="3.3" ry="3.45" fill="#101010" stroke="#10d010" stroke-width="1.35"/><path d="M524.40 121.50L526.60 123.40L524.40 125.30Z" fill="#10d010"/>
<text x="512.5" y="126.3" font-family="Liberation Sans" font-size="8.0" fill="#dcdcdc" text-anchor="end" textLength="6.2" lengthAdjust="spacingAndGlyphs">G</text>
<ellipse cx="520" cy="143.2" rx="3.3" ry="3.45" fill="#101010" stroke="#1010e0" stroke-width="1.35"/><path d="M524.40 141.30L526.60 143.20L524.40 145.10Z" fill="#1010e0"/>
<text x="512.5" y="146.1" font-family="Liberation Sans" font-size="8.0" fill="#dcdcdc" text-anchor="end" textLength="5.3" lengthAdjust="spacingAndGlyphs">B</text>
<ellipse cx="520" cy="162.7" rx="3.95" ry="4.1" fill="#c4c4c4"/><path d="M524.40 160.80L526.60 162.70L524.40 164.60Z" fill="#c4c4c4"/>
<text x="512.5" y="165.6" font-family="Liberation Sans" font-size="8.0" fill="#dcdcdc" text-anchor="end" textLength="5.3" lengthAdjust="spacingAndGlyphs">A</text>
<ellipse cx="520" cy="182.7" rx="3.3" ry="3.45" fill="#101010" stroke="#f0f0f0" stroke-width="1.35"/><path d="M524.40 180.80L526.60 182.70L524.40 184.60Z" fill="#f0f0f0"/>
<text x="512.5" y="185.6" font-family="Liberation Sans" font-size="8.0" fill="#dcdcdc" text-anchor="end" textLength="22.7" lengthAdjust="spacingAndGlyphs">RGBA</text>
<path d="M461.7 197.8L465.0 201.2L468.3 197.8" stroke="#e8e8e8" stroke-width="1.5" fill="none"/>
<rect x="587.3" y="33.5" width="114.70000000000005" height="130.0" rx="5.5" fill="#000" fill-opacity="0.3"/>
<rect x="588.8" y="34" width="111.70000000000005" height="126.80000000000001" rx="4" fill="#121412" fill-opacity="0.84" stroke="#0c0c0c" stroke-opacity="0.8" stroke-width="1"/>
<g clip-path="url(#hc6)">
<rect x="588.8" y="34" width="111.70000000000005" height="26.200000000000003" fill="url(#hg6)" fill-opacity="0.92"/>
<rect x="588.8" y="34" width="111.70000000000005" height="26.200000000000003" fill="url(#hr6)"/>
<rect x="588.8" y="34" width="111.70000000000005" height="1" fill="#fff" fill-opacity="0.12"/>
</g>
<text x="598.3" y="45.8" font-family="Liberation Sans" font-weight="bold" font-size="9" fill="#000" fill-opacity="0.6" textLength="78.3" lengthAdjust="spacingAndGlyphs">Gravel - Tint Colour</text>
<text x="597.8" y="45.0" font-family="Liberation Sans" font-weight="bold" font-size="9" fill="#d4d4d4" textLength="78.3" lengthAdjust="spacingAndGlyphs">Gravel - Tint Colour</text>
<text x="597.8" y="55.8" font-family="Liberation Sans" font-style="italic" font-size="8" fill="#c9b070" textLength="54.9" lengthAdjust="spacingAndGlyphs">Param (1,1,1,1)</text>
<path d="M689.1 48.5L692.4 45.2L695.7 48.5" stroke="#e8e8e8" stroke-width="1.5" fill="none"/>
<text x="658.0" y="76.0" font-family="Liberation Sans" font-size="8.0" fill="#dcdcdc" text-anchor="end" textLength="47.4" lengthAdjust="spacingAndGlyphs">Default Value</text>
<rect x="661.2" y="68" width="11" height="11" fill="#fff"/>
<rect x="593" y="88" width="64.3" height="64.1" fill="#fff"/>
<ellipse cx="687.6" cy="71.7" rx="3.95" ry="4.1" fill="#f0f0f0"/><path d="M692.00 69.80L694.20 71.70L692.00 73.60Z" fill="#f0f0f0"/>
<ellipse cx="687.6" cy="91.4" rx="3.3" ry="3.45" fill="#101010" stroke="#e01010" stroke-width="1.35"/><path d="M692.00 89.50L694.20 91.40L692.00 93.30Z" fill="#e01010"/>
<ellipse cx="687.6" cy="111.6" rx="3.3" ry="3.45" fill="#101010" stroke="#10d010" stroke-width="1.35"/><path d="M692.00 109.70L694.20 111.60L692.00 113.50Z" fill="#10d010"/>
<ellipse cx="687.6" cy="131" rx="3.3" ry="3.45" fill="#101010" stroke="#1010e0" stroke-width="1.35"/><path d="M692.00 129.10L694.20 131.00L692.00 132.90Z" fill="#1010e0"/>
<ellipse cx="687.6" cy="151" rx="3.3" ry="3.45" fill="#101010" stroke="#cfcfcf" stroke-width="1.35"/><path d="M692.00 149.10L694.20 151.00L692.00 152.90Z" fill="#cfcfcf"/>
<rect x="706.3" y="33.5" width="66.70000000000005" height="61.10000000000001" rx="5.5" fill="#000" fill-opacity="0.3"/>
<rect x="707.8" y="34" width="63.700000000000045" height="57.900000000000006" rx="4" fill="#121412" fill-opacity="0.84" stroke="#0c0c0c" stroke-opacity="0.8" stroke-width="1"/>
<g clip-path="url(#hc7)">
<rect x="707.8" y="34" width="63.700000000000045" height="16" fill="url(#hg7)" fill-opacity="0.92"/>
<rect x="707.8" y="34" width="63.700000000000045" height="16" fill="url(#hr7)"/>
<rect x="707.8" y="34" width="63.700000000000045" height="1" fill="#fff" fill-opacity="0.12"/>
</g>
<text x="717.3" y="46.0" font-family="Liberation Sans" font-weight="bold" font-size="9" fill="#000" fill-opacity="0.6" textLength="31.7" lengthAdjust="spacingAndGlyphs">Multiply</text>
<text x="716.8" y="45.2" font-family="Liberation Sans" font-weight="bold" font-size="9" fill="#d4d4d4" textLength="31.7" lengthAdjust="spacingAndGlyphs">Multiply</text>
<path d="M760.2 40.4L763.5 43.6L766.8 40.4" stroke="#e8e8e8" stroke-width="1.5" fill="none"/>
<ellipse cx="718.2" cy="61.6" rx="3.95" ry="4.1" fill="#3a3b3a"/><path d="M722.60 59.70L724.80 61.60L722.60 63.50Z" fill="#2e2f2e"/>
<text x="727.0" y="64.5" font-family="Liberation Sans" font-size="8.0" fill="#dcdcdc" text-anchor="start" textLength="5.3" lengthAdjust="spacingAndGlyphs">A</text>
<ellipse cx="718.2" cy="81.3" rx="3.95" ry="4.1" fill="#3a3b3a"/><path d="M722.60 79.40L724.80 81.30L722.60 83.20Z" fill="#2e2f2e"/>
<text x="727.0" y="84.2" font-family="Liberation Sans" font-size="8.0" fill="#dcdcdc" text-anchor="start" textLength="5.3" lengthAdjust="spacingAndGlyphs">B</text>
<ellipse cx="758.8" cy="61.6" rx="3.95" ry="4.1" fill="#f0f0f0"/><path d="M763.20 59.70L765.40 61.60L763.20 63.50Z" fill="#f0f0f0"/>
<rect x="782.1" y="33.5" width="115.60000000000002" height="94.4" rx="5.5" fill="#000" fill-opacity="0.3"/>
<rect x="783.6" y="34" width="112.60000000000002" height="91.2" rx="4" fill="#121412" fill-opacity="0.84" stroke="#0c0c0c" stroke-opacity="0.8" stroke-width="1"/>
<g clip-path="url(#hc8)">
<rect x="783.6" y="34" width="112.60000000000002" height="26.200000000000003" fill="url(#hg8)" fill-opacity="0.92"/>
<rect x="783.6" y="34" width="112.60000000000002" height="26.200000000000003" fill="url(#hr8)"/>
<rect x="783.6" y="34" width="112.60000000000002" height="1" fill="#fff" fill-opacity="0.12"/>
</g>
<text x="793.1" y="45.8" font-family="Liberation Sans" font-weight="bold" font-size="9" fill="#000" fill-opacity="0.6" textLength="48.9" lengthAdjust="spacingAndGlyphs">Gravel - Tint</text>
<text x="792.6" y="45.0" font-family="Liberation Sans" font-weight="bold" font-size="9" fill="#d4d4d4" textLength="48.9" lengthAdjust="spacingAndGlyphs">Gravel - Tint</text>
<text x="792.6" y="55.8" font-family="Liberation Sans" font-style="italic" font-size="8" fill="#8ab8a8" textLength="75.5" lengthAdjust="spacingAndGlyphs">Switch Param (False)</text>
<ellipse cx="794" cy="71.7" rx="3.95" ry="4.1" fill="#f0f0f0"/><path d="M798.40 69.80L800.60 71.70L798.40 73.60Z" fill="#f0f0f0"/>
<text x="804.0" y="74.6" font-family="Liberation Sans" font-size="8.0" fill="#dcdcdc" text-anchor="start" textLength="16.2" lengthAdjust="spacingAndGlyphs">True</text>
<ellipse cx="794" cy="91.4" rx="3.95" ry="4.1" fill="#f0f0f0"/><path d="M798.40 89.50L800.60 91.40L798.40 93.30Z" fill="#f0f0f0"/>
<text x="804.0" y="94.3" font-family="Liberation Sans" font-size="8.0" fill="#dcdcdc" text-anchor="start" textLength="19.6" lengthAdjust="spacingAndGlyphs">False</text>
<ellipse cx="882.9" cy="71.7" rx="3.95" ry="4.1" fill="#f0f0f0"/><path d="M887.30 69.80L889.50 71.70L887.30 73.60Z" fill="#f0f0f0"/>
<text x="852.0" y="115.0" font-family="Liberation Sans" font-size="8.0" fill="#dcdcdc" text-anchor="end" textLength="47.4" lengthAdjust="spacingAndGlyphs">Default Value</text>
<rect x="855.5" y="107.5" width="10.8" height="11.0" fill="#151515" stroke="#666" stroke-width="0.6"/>
<rect x="934.5" y="24.6" width="191.5" height="99.3" rx="5.5" fill="#000" fill-opacity="0.3"/>
<rect x="936" y="25.1" width="188.5" height="96.1" rx="4" fill="#121412" fill-opacity="0.84" stroke="#0c0c0c" stroke-opacity="0.8" stroke-width="1"/>
<g clip-path="url(#hc9)">
<rect x="936" y="25.1" width="188.5" height="14.899999999999999" fill="url(#hg9)" fill-opacity="0.92"/>
<rect x="936" y="25.1" width="188.5" height="14.899999999999999" fill="url(#hr9)"/>
<rect x="936" y="25.1" width="188.5" height="1" fill="#fff" fill-opacity="0.12"/>
</g>
<text x="945.5" y="36.5" font-family="Liberation Sans" font-weight="bold" font-size="9" fill="#000" fill-opacity="0.6" textLength="105.8" lengthAdjust="spacingAndGlyphs">MF_DistantTextureOverlay</text>
<text x="945.0" y="35.8" font-family="Liberation Sans" font-weight="bold" font-size="9" fill="#d4d4d4" textLength="105.8" lengthAdjust="spacingAndGlyphs">MF_DistantTextureOverlay</text>
<ellipse cx="946.6" cy="51.3" rx="3.95" ry="4.1" fill="#f0f0f0"/><path d="M951.00 49.40L953.20 51.30L951.00 53.20Z" fill="#f0f0f0"/>
<text x="956.0" y="54.2" font-family="Liberation Sans" font-size="8.0" fill="#dcdcdc" text-anchor="start" textLength="54.7" lengthAdjust="spacingAndGlyphs">BaseColor (V3)</text>
<ellipse cx="946.6" cy="70.8" rx="3.95" ry="4.1" fill="#f0f0f0"/><path d="M951.00 68.90L953.20 70.80L951.00 72.70Z" fill="#f0f0f0"/>
<text x="956.0" y="73.7" font-family="Liberation Sans" font-size="8.0" fill="#dcdcdc" text-anchor="start" textLength="57.8" lengthAdjust="spacingAndGlyphs">Roughness (V3)</text>
<ellipse cx="946.6" cy="90.7" rx="3.95" ry="4.1" fill="#f0f0f0"/><path d="M951.00 88.80L953.20 90.70L951.00 92.60Z" fill="#f0f0f0"/>
<text x="956.0" y="93.6" font-family="Liberation Sans" font-size="8.0" fill="#dcdcdc" text-anchor="start" textLength="47.1" lengthAdjust="spacingAndGlyphs">Normals (V3)</text>
<ellipse cx="1112" cy="51.3" rx="3.95" ry="4.1" fill="#f0f0f0"/><path d="M1116.40 49.40L1118.60 51.30L1116.40 53.20Z" fill="#f0f0f0"/>
<text x="1104.5" y="54.2" font-family="Liberation Sans" font-size="8.0" fill="#dcdcdc" text-anchor="end" textLength="37.4" lengthAdjust="spacingAndGlyphs">BaseColor</text>
<ellipse cx="1112" cy="70.8" rx="3.3" ry="3.45" fill="#101010" stroke="#f0f0f0" stroke-width="1.35"/><path d="M1116.40 68.90L1118.60 70.80L1116.40 72.70Z" fill="#f0f0f0"/>
<text x="1104.5" y="73.7" font-family="Liberation Sans" font-size="8.0" fill="#dcdcdc" text-anchor="end" textLength="85.4" lengthAdjust="spacingAndGlyphs">BaseColor_AlwaysFade</text>
<ellipse cx="1112" cy="90.7" rx="3.95" ry="4.1" fill="#f0f0f0"/><path d="M1116.40 88.80L1118.60 90.70L1116.40 92.60Z" fill="#f0f0f0"/>
<text x="1104.5" y="93.6" font-family="Liberation Sans" font-size="8.0" fill="#dcdcdc" text-anchor="end" textLength="40.5" lengthAdjust="spacingAndGlyphs">Roughness</text>
<ellipse cx="1112" cy="110.3" rx="3.95" ry="4.1" fill="#f0f0f0"/><path d="M1116.40 108.40L1118.60 110.30L1116.40 112.20Z" fill="#f0f0f0"/>
<text x="1104.5" y="113.2" font-family="Liberation Sans" font-size="8.0" fill="#dcdcdc" text-anchor="end" textLength="29.8" lengthAdjust="spacingAndGlyphs">Normals</text>
<rect x="1160.0" y="22.5" width="130.79999999999995" height="556.0" rx="5.5" fill="#000" fill-opacity="0.3"/>
<rect x="1161.5" y="23" width="127.79999999999995" height="552.8" rx="4" fill="#121412" fill-opacity="0.84" stroke="#0c0c0c" stroke-opacity="0.8" stroke-width="1"/>
<g clip-path="url(#hc10)">
<rect x="1161.5" y="23" width="127.79999999999995" height="16" fill="url(#hg10)" fill-opacity="0.92"/>
<rect x="1161.5" y="23" width="127.79999999999995" height="16" fill="url(#hr10)"/>
<rect x="1161.5" y="23" width="127.79999999999995" height="1" fill="#fff" fill-opacity="0.12"/>
</g>
<text x="1171.0" y="35.0" font-family="Liberation Sans" font-weight="bold" font-size="9" fill="#000" fill-opacity="0.6" textLength="92.4" lengthAdjust="spacingAndGlyphs">MakeMaterialAttributes</text>
<text x="1170.5" y="34.2" font-family="Liberation Sans" font-weight="bold" font-size="9" fill="#d4d4d4" textLength="92.4" lengthAdjust="spacingAndGlyphs">MakeMaterialAttributes</text>
<path d="M1277.7 29.4L1281.0 32.6L1284.3 29.4" stroke="#e8e8e8" stroke-width="1.5" fill="none"/>
<ellipse cx="1172.2" cy="50.5" rx="3.95" ry="4.1" fill="#f0f0f0"/><path d="M1176.60 48.60L1178.80 50.50L1176.60 52.40Z" fill="#f0f0f0"/>
<text x="1182.0" y="53.4" font-family="Liberation Sans" font-size="8.0" fill="#dcdcdc" text-anchor="start" textLength="37.4" lengthAdjust="spacingAndGlyphs">BaseColor</text>
<ellipse cx="1172.2" cy="70.3" rx="3.3" ry="3.45" fill="#101010" stroke="#f0f0f0" stroke-width="1.35"/><path d="M1176.60 68.40L1178.80 70.30L1176.60 72.20Z" fill="#f0f0f0"/>
<text x="1182.0" y="73.2" font-family="Liberation Sans" font-size="8.0" fill="#dcdcdc" text-anchor="start" textLength="27.1" lengthAdjust="spacingAndGlyphs">Metallic</text>
<ellipse cx="1172.2" cy="90.1" rx="3.95" ry="4.1" fill="#f0f0f0"/><path d="M1176.60 88.20L1178.80 90.10L1176.60 92.00Z" fill="#f0f0f0"/>
<text x="1182.0" y="93.0" font-family="Liberation Sans" font-size="8.0" fill="#dcdcdc" text-anchor="start" textLength="31.6" lengthAdjust="spacingAndGlyphs">Specular</text>
<ellipse cx="1172.2" cy="109.9" rx="3.95" ry="4.1" fill="#f0f0f0"/><path d="M1176.60 108.00L1178.80 109.90L1176.60 111.80Z" fill="#f0f0f0"/>
<text x="1182.0" y="112.8" font-family="Liberation Sans" font-size="8.0" fill="#dcdcdc" text-anchor="start" textLength="40.5" lengthAdjust="spacingAndGlyphs">Roughness</text>
<ellipse cx="1172.2" cy="129.7" rx="3.3" ry="3.45" fill="#101010" stroke="#f0f0f0" stroke-width="1.35"/><path d="M1176.60 127.80L1178.80 129.70L1176.60 131.60Z" fill="#f0f0f0"/>
<text x="1182.0" y="132.6" font-family="Liberation Sans" font-size="8.0" fill="#dcdcdc" text-anchor="start" textLength="37.8" lengthAdjust="spacingAndGlyphs">Anisotropy</text>
<ellipse cx="1172.2" cy="149.5" rx="3.3" ry="3.45" fill="#101010" stroke="#f0f0f0" stroke-width="1.35"/><path d="M1176.60 147.60L1178.80 149.50L1176.60 151.40Z" fill="#f0f0f0"/>
<text x="1182.0" y="152.4" font-family="Liberation Sans" font-size="8.0" fill="#dcdcdc" text-anchor="start" textLength="51.1" lengthAdjust="spacingAndGlyphs">EmissiveColor</text>
<ellipse cx="1172.2" cy="169.3" rx="3.3" ry="3.45" fill="#101010" stroke="#f0f0f0" stroke-width="1.35"/><path d="M1176.60 167.40L1178.80 169.30L1176.60 171.20Z" fill="#f0f0f0"/>
<text x="1182.0" y="172.2" font-family="Liberation Sans" font-size="8.0" fill="#dcdcdc" text-anchor="start" textLength="27.1" lengthAdjust="spacingAndGlyphs">Opacity</text>
<ellipse cx="1172.2" cy="189.1" rx="3.3" ry="3.45" fill="#101010" stroke="#f0f0f0" stroke-width="1.35"/><path d="M1176.60 187.20L1178.80 189.10L1176.60 191.00Z" fill="#f0f0f0"/>
<text x="1182.0" y="192.0" font-family="Liberation Sans" font-size="8.0" fill="#dcdcdc" text-anchor="start" textLength="46.2" lengthAdjust="spacingAndGlyphs">OpacityMask</text>
<ellipse cx="1172.2" cy="208.9" rx="3.95" ry="4.1" fill="#f0f0f0"/><path d="M1176.60 207.00L1178.80 208.90L1176.60 210.80Z" fill="#f0f0f0"/>
<text x="1182.0" y="211.8" font-family="Liberation Sans" font-size="8.0" fill="#dcdcdc" text-anchor="start" textLength="25.8" lengthAdjust="spacingAndGlyphs">Normal</text>
<ellipse cx="1172.2" cy="228.70000000000002" rx="3.3" ry="3.45" fill="#101010" stroke="#f0f0f0" stroke-width="1.35"/><path d="M1176.60 226.80L1178.80 228.70L1176.60 230.60Z" fill="#f0f0f0"/>
<text x="1182.0" y="231.6" font-family="Liberation Sans" font-size="8.0" fill="#dcdcdc" text-anchor="start" textLength="28.5" lengthAdjust="spacingAndGlyphs">Tangent</text>
<ellipse cx="1172.2" cy="248.5" rx="3.3" ry="3.45" fill="#101010" stroke="#f0f0f0" stroke-width="1.35"/><path d="M1176.60 246.60L1178.80 248.50L1176.60 250.40Z" fill="#f0f0f0"/>
<text x="1182.0" y="251.4" font-family="Liberation Sans" font-size="8.0" fill="#dcdcdc" text-anchor="start" textLength="70.4" lengthAdjust="spacingAndGlyphs">WorldPositionOffset</text>
<ellipse cx="1172.2" cy="268.3" rx="3.3" ry="3.45" fill="#101010" stroke="#f0f0f0" stroke-width="1.35"/><path d="M1176.60 266.40L1178.80 268.30L1176.60 270.20Z" fill="#f0f0f0"/>
<text x="1182.0" y="271.2" font-family="Liberation Sans" font-size="8.0" fill="#dcdcdc" text-anchor="start" textLength="59.6" lengthAdjust="spacingAndGlyphs">SubsurfaceColor</text>
<ellipse cx="1172.2" cy="288.1" rx="3.3" ry="3.45" fill="#101010" stroke="#f0f0f0" stroke-width="1.35"/><path d="M1176.60 286.20L1178.80 288.10L1176.60 290.00Z" fill="#f0f0f0"/>
<text x="1182.0" y="291.0" font-family="Liberation Sans" font-size="8.0" fill="#dcdcdc" text-anchor="start" textLength="36.0" lengthAdjust="spacingAndGlyphs">ClearCoat</text>
<ellipse cx="1172.2" cy="307.90000000000003" rx="3.3" ry="3.45" fill="#101010" stroke="#f0f0f0" stroke-width="1.35"/><path d="M1176.60 306.00L1178.80 307.90L1176.60 309.80Z" fill="#f0f0f0"/>
<text x="1182.0" y="310.8" font-family="Liberation Sans" font-size="8.0" fill="#dcdcdc" text-anchor="start" textLength="76.5" lengthAdjust="spacingAndGlyphs">ClearCoatRoughness</text>
<ellipse cx="1172.2" cy="327.7" rx="3.3" ry="3.45" fill="#101010" stroke="#f0f0f0" stroke-width="1.35"/><path d="M1176.60 325.80L1178.80 327.70L1176.60 329.60Z" fill="#f0f0f0"/>
<text x="1182.0" y="330.6" font-family="Liberation Sans" font-size="8.0" fill="#dcdcdc" text-anchor="start" textLength="64.5" lengthAdjust="spacingAndGlyphs">AmbientOcclusion</text>
<ellipse cx="1172.2" cy="347.5" rx="3.3" ry="3.45" fill="#101010" stroke="#f0f0f0" stroke-width="1.35"/><path d="M1176.60 345.60L1178.80 347.50L1176.60 349.40Z" fill="#f0f0f0"/>
<text x="1182.0" y="350.4" font-family="Liberation Sans" font-size="8.0" fill="#dcdcdc" text-anchor="start" textLength="36.5" lengthAdjust="spacingAndGlyphs">Refraction</text>
<ellipse cx="1172.2" cy="367.3" rx="3.3" ry="3.45" fill="#101010" stroke="#f0f0f0" stroke-width="1.35"/><path d="M1176.60 365.40L1178.80 367.30L1176.60 369.20Z" fill="#f0f0f0"/>
<text x="1182.0" y="370.2" font-family="Liberation Sans" font-size="8.0" fill="#dcdcdc" text-anchor="start" textLength="66.3" lengthAdjust="spacingAndGlyphs">CustomizedUVs_0</text>
<ellipse cx="1172.2" cy="387.1" rx="3.3" ry="3.45" fill="#101010" stroke="#f0f0f0" stroke-width="1.35"/><path d="M1176.60 385.20L1178.80 387.10L1176.60 389.00Z" fill="#f0f0f0"/>
<text x="1182.0" y="390.0" font-family="Liberation Sans" font-size="8.0" fill="#dcdcdc" text-anchor="start" textLength="66.3" lengthAdjust="spacingAndGlyphs">CustomizedUVs_1</text>
<ellipse cx="1172.2" cy="406.90000000000003" rx="3.3" ry="3.45" fill="#101010" stroke="#f0f0f0" stroke-width="1.35"/><path d="M1176.60 405.00L1178.80 406.90L1176.60 408.80Z" fill="#f0f0f0"/>
<text x="1182.0" y="409.8" font-family="Liberation Sans" font-size="8.0" fill="#dcdcdc" text-anchor="start" textLength="66.3" lengthAdjust="spacingAndGlyphs">CustomizedUVs_2</text>
<ellipse cx="1172.2" cy="426.7" rx="3.3" ry="3.45" fill="#101010" stroke="#f0f0f0" stroke-width="1.35"/><path d="M1176.60 424.80L1178.80 426.70L1176.60 428.60Z" fill="#f0f0f0"/>
<text x="1182.0" y="429.6" font-family="Liberation Sans" font-size="8.0" fill="#dcdcdc" text-anchor="start" textLength="66.3" lengthAdjust="spacingAndGlyphs">CustomizedUVs_3</text>
<ellipse cx="1172.2" cy="446.5" rx="3.3" ry="3.45" fill="#101010" stroke="#f0f0f0" stroke-width="1.35"/><path d="M1176.60 444.60L1178.80 446.50L1176.60 448.40Z" fill="#f0f0f0"/>
<text x="1182.0" y="449.4" font-family="Liberation Sans" font-size="8.0" fill="#dcdcdc" text-anchor="start" textLength="66.3" lengthAdjust="spacingAndGlyphs">CustomizedUVs_4</text>
<ellipse cx="1172.2" cy="466.3" rx="3.3" ry="3.45" fill="#101010" stroke="#f0f0f0" stroke-width="1.35"/><path d="M1176.60 464.40L1178.80 466.30L1176.60 468.20Z" fill="#f0f0f0"/>
<text x="1182.0" y="469.2" font-family="Liberation Sans" font-size="8.0" fill="#dcdcdc" text-anchor="start" textLength="66.3" lengthAdjust="spacingAndGlyphs">CustomizedUVs_5</text>
<ellipse cx="1172.2" cy="486.1" rx="3.3" ry="3.45" fill="#101010" stroke="#f0f0f0" stroke-width="1.35"/><path d="M1176.60 484.20L1178.80 486.10L1176.60 488.00Z" fill="#f0f0f0"/>
<text x="1182.0" y="489.0" font-family="Liberation Sans" font-size="8.0" fill="#dcdcdc" text-anchor="start" textLength="66.3" lengthAdjust="spacingAndGlyphs">CustomizedUVs_6</text>
<ellipse cx="1172.2" cy="505.90000000000003" rx="3.3" ry="3.45" fill="#101010" stroke="#f0f0f0" stroke-width="1.35"/><path d="M1176.60 504.00L1178.80 505.90L1176.60 507.80Z" fill="#f0f0f0"/>
<text x="1182.0" y="508.8" font-family="Liberation Sans" font-size="8.0" fill="#dcdcdc" text-anchor="start" textLength="66.3" lengthAdjust="spacingAndGlyphs">CustomizedUVs_7</text>
<ellipse cx="1172.2" cy="525.7" rx="3.95" ry="4.1" fill="#f0f0f0"/><path d="M1176.60 523.80L1178.80 525.70L1176.60 527.60Z" fill="#f0f0f0"/>
<text x="1182.0" y="528.6" font-family="Liberation Sans" font-size="8.0" fill="#dcdcdc" text-anchor="start" textLength="59.9" lengthAdjust="spacingAndGlyphs">PixelDepthOffset</text>
<ellipse cx="1172.2" cy="545.5" rx="3.3" ry="3.45" fill="#101010" stroke="#f0f0f0" stroke-width="1.35"/><path d="M1176.60 543.60L1178.80 545.50L1176.60 547.40Z" fill="#f0f0f0"/>
<text x="1182.0" y="548.4" font-family="Liberation Sans" font-size="8.0" fill="#dcdcdc" text-anchor="start" textLength="51.2" lengthAdjust="spacingAndGlyphs">ShadingModel</text>
<ellipse cx="1172.2" cy="565.3000000000001" rx="3.95" ry="4.1" fill="#f0f0f0"/><path d="M1176.60 563.40L1178.80 565.30L1176.60 567.20Z" fill="#f0f0f0"/>
<text x="1182.0" y="568.2" font-family="Liberation Sans" font-size="8.0" fill="#dcdcdc" text-anchor="start" textLength="48.5" lengthAdjust="spacingAndGlyphs">Displacement</text>
<ellipse cx="1276.2" cy="50.5" rx="3.95" ry="4.1" fill="#f0f0f0"/><path d="M1280.60 48.60L1282.80 50.50L1280.60 52.40Z" fill="#f0f0f0"/>
<rect x="1311.3" y="1.7999999999999998" width="89.29999999999995" height="62.50000000000001" rx="5.5" fill="#000" fill-opacity="0.3"/>
<rect x="1312.8" y="2.3" width="86.29999999999995" height="59.300000000000004" rx="4" fill="#121412" fill-opacity="0.84" stroke="#0c0c0c" stroke-opacity="0.8" stroke-width="1"/>
<g clip-path="url(#hc11)">
<rect x="1312.8" y="2.3" width="86.29999999999995" height="36.7" fill="url(#hg11)" fill-opacity="0.92"/>
<rect x="1312.8" y="2.3" width="86.29999999999995" height="36.7" fill="url(#hr11)"/>
<rect x="1312.8" y="2.3" width="86.29999999999995" height="1" fill="#fff" fill-opacity="0.12"/>
</g>
<text x="1322.3" y="14.1" font-family="Liberation Sans" font-weight="bold" font-size="9" fill="#000" fill-opacity="0.6" textLength="55.5" lengthAdjust="spacingAndGlyphs">Output Result</text>
<text x="1321.8" y="13.3" font-family="Liberation Sans" font-weight="bold" font-size="9" fill="#d4d4d4" textLength="55.5" lengthAdjust="spacingAndGlyphs">Output Result</text>
<text x="1321.8" y="35.0" font-family="Liberation Sans" font-style="italic" font-size="8" fill="#8a8ac8" textLength="38.6" lengthAdjust="spacingAndGlyphs">Previewing</text>
<path d="M1388.2 17.9L1391.5 21.1L1394.8 17.9" stroke="#e8e8e8" stroke-width="1.5" fill="none"/>
<ellipse cx="1323.1" cy="50.5" rx="3.95" ry="4.1" fill="#f0f0f0"/><path d="M1327.50 48.60L1329.70 50.50L1327.50 52.40Z" fill="#f0f0f0"/>
<ellipse cx="1386.5" cy="50.5" rx="3.3" ry="3.45" fill="#101010" stroke="#f0f0f0" stroke-width="1.35"/><path d="M1390.90 48.60L1393.10 50.50L1390.90 52.40Z" fill="#f0f0f0"/>
<rect x="393.9" y="294.4" width="140.10000000000002" height="162.8" rx="5.5" fill="#000" fill-opacity="0.3"/>
<rect x="395.4" y="294.9" width="137.10000000000002" height="159.60000000000002" rx="4" fill="#121412" fill-opacity="0.84" stroke="#0c0c0c" stroke-opacity="0.8" stroke-width="1"/>
<g clip-path="url(#hc12)">
<rect x="395.4" y="294.9" width="137.10000000000002" height="25.80000000000001" fill="url(#hg12)" fill-opacity="0.92"/>
<rect x="395.4" y="294.9" width="137.10000000000002" height="25.80000000000001" fill="url(#hr12)"/>
<rect x="395.4" y="294.9" width="137.10000000000002" height="1" fill="#fff" fill-opacity="0.12"/>
<rect x="395.4" y="442" width="137.10000000000002" height="12.5" fill="#000" fill-opacity="0.25"/>
</g>
<text x="404.9" y="306.7" font-family="Liberation Sans" font-weight="bold" font-size="9" fill="#000" fill-opacity="0.6" textLength="67.2" lengthAdjust="spacingAndGlyphs">Gravel - Normals</text>
<text x="404.4" y="305.9" font-family="Liberation Sans" font-weight="bold" font-size="9" fill="#d4d4d4" textLength="67.2" lengthAdjust="spacingAndGlyphs">Gravel - Normals</text>
<text x="404.4" y="316.7" font-family="Liberation Sans" font-style="italic" font-size="8" fill="#7fb3a8" textLength="33.4" lengthAdjust="spacingAndGlyphs">Param2D</text>
<path d="M520.7 308.6L524.0 305.4L527.3 308.6" stroke="#e8e8e8" stroke-width="1.5" fill="none"/>
<ellipse cx="407" cy="332.2" rx="3.95" ry="4.1" fill="#3a3b3a"/><path d="M411.40 330.30L413.60 332.20L411.40 334.10Z" fill="#2e2f2e"/>
<text x="416.0" y="335.1" font-family="Liberation Sans" font-size="8.0" fill="#dcdcdc" text-anchor="start" textLength="15.1" lengthAdjust="spacingAndGlyphs">UVs</text>
<ellipse cx="407" cy="351.7" rx="3.4" ry="3.5" fill="#111" stroke="#2c2c2c" stroke-width="1.2"/><path d="M411.40 349.80L413.60 351.70L411.40 353.60Z" fill="#262626"/>
<text x="416.0" y="354.6" font-family="Liberation Sans" font-size="8.0" fill="#dcdcdc" text-anchor="start" textLength="70.1" lengthAdjust="spacingAndGlyphs">Apply View MipBias</text>
<ellipse cx="520" cy="332.2" rx="3.95" ry="4.1" fill="#f0f0f0"/><path d="M524.40 330.30L526.60 332.20L524.40 334.10Z" fill="#f0f0f0"/>
<text x="512.5" y="335.1" font-family="Liberation Sans" font-size="8.0" fill="#dcdcdc" text-anchor="end" textLength="17.3" lengthAdjust="spacingAndGlyphs">RGB</text>
<ellipse cx="520" cy="351.7" rx="3.3" ry="3.45" fill="#101010" stroke="#e01010" stroke-width="1.35"/><path d="M524.40 349.80L526.60 351.70L524.40 353.60Z" fill="#e01010"/>
<text x="512.5" y="354.6" font-family="Liberation Sans" font-size="8.0" fill="#dcdcdc" text-anchor="end" textLength="5.8" lengthAdjust="spacingAndGlyphs">R</text>
<ellipse cx="520" cy="371.9" rx="3.3" ry="3.45" fill="#101010" stroke="#10d010" stroke-width="1.35"/><path d="M524.40 370.00L526.60 371.90L524.40 373.80Z" fill="#10d010"/>
<text x="512.5" y="374.8" font-family="Liberation Sans" font-size="8.0" fill="#dcdcdc" text-anchor="end" textLength="6.2" lengthAdjust="spacingAndGlyphs">G</text>
<ellipse cx="520" cy="391.5" rx="3.95" ry="4.1" fill="#1010e0"/><path d="M524.40 389.60L526.60 391.50L524.40 393.40Z" fill="#1010e0"/>
<text x="512.5" y="394.4" font-family="Liberation Sans" font-size="8.0" fill="#dcdcdc" text-anchor="end" textLength="5.3" lengthAdjust="spacingAndGlyphs">B</text>
<ellipse cx="520" cy="411.5" rx="3.95" ry="4.1" fill="#c4c4c4"/><path d="M524.40 409.60L526.60 411.50L524.40 413.40Z" fill="#c4c4c4"/>
<text x="512.5" y="414.4" font-family="Liberation Sans" font-size="8.0" fill="#dcdcdc" text-anchor="end" textLength="5.3" lengthAdjust="spacingAndGlyphs">A</text>
<ellipse cx="520" cy="431" rx="3.3" ry="3.45" fill="#101010" stroke="#f0f0f0" stroke-width="1.35"/><path d="M524.40 429.10L526.60 431.00L524.40 432.90Z" fill="#f0f0f0"/>
<text x="512.5" y="433.9" font-family="Liberation Sans" font-size="8.0" fill="#dcdcdc" text-anchor="end" textLength="22.7" lengthAdjust="spacingAndGlyphs">RGBA</text>
<path d="M461.7 445.9L465.0 449.1L468.3 445.9" stroke="#e8e8e8" stroke-width="1.5" fill="none"/>
<rect x="544.3" y="292.1" width="116.90000000000009" height="40.59999999999998" rx="5.5" fill="#000" fill-opacity="0.3"/>
<rect x="545.8" y="292.6" width="113.90000000000009" height="37.39999999999998" rx="4" fill="#121412" fill-opacity="0.84" stroke="#0c0c0c" stroke-opacity="0.8" stroke-width="1"/>
<g clip-path="url(#hc13)">
<rect x="545.8" y="292.6" width="113.90000000000009" height="16.399999999999977" fill="url(#hg13)" fill-opacity="0.92"/>
<rect x="545.8" y="292.6" width="113.90000000000009" height="16.399999999999977" fill="url(#hr13)"/>
<rect x="545.8" y="292.6" width="113.90000000000009" height="1" fill="#fff" fill-opacity="0.12"/>
</g>
<text x="555.3" y="304.8" font-family="Liberation Sans" font-weight="bold" font-size="9" fill="#000" fill-opacity="0.6" textLength="70.9" lengthAdjust="spacingAndGlyphs">MF_ReconstructZ</text>
<text x="554.8" y="304.0" font-family="Liberation Sans" font-weight="bold" font-size="9" fill="#d4d4d4" textLength="70.9" lengthAdjust="spacingAndGlyphs">MF_ReconstructZ</text>
<ellipse cx="556" cy="319.3" rx="3.95" ry="4.1" fill="#3a3b3a"/><path d="M560.40 317.40L562.60 319.30L560.40 321.20Z" fill="#2e2f2e"/>
<text x="565.5" y="322.2" font-family="Liberation Sans" font-size="8.0" fill="#dcdcdc" text-anchor="start" textLength="43.1" lengthAdjust="spacingAndGlyphs">Normal (V3)</text>
<ellipse cx="646.8" cy="319.3" rx="3.95" ry="4.1" fill="#f0f0f0"/><path d="M651.20 317.40L653.40 319.30L651.20 321.20Z" fill="#f0f0f0"/>
<text x="639.0" y="322.2" font-family="Liberation Sans" font-size="8.0" fill="#dcdcdc" text-anchor="end" textLength="22.7" lengthAdjust="spacingAndGlyphs">Result</text>
<rect x="684.2" y="249.3" width="140.79999999999995" height="56.59999999999998" rx="5.5" fill="#000" fill-opacity="0.3"/>
<rect x="685.7" y="249.8" width="137.79999999999995" height="53.39999999999998" rx="4" fill="#121412" fill-opacity="0.84" stroke="#0c0c0c" stroke-opacity="0.8" stroke-width="1"/>
<g clip-path="url(#hc14)">
<rect x="685.7" y="249.8" width="137.79999999999995" height="26.19999999999999" fill="url(#hg14)" fill-opacity="0.92"/>
<rect x="685.7" y="249.8" width="137.79999999999995" height="26.19999999999999" fill="url(#hr14)"/>
<rect x="685.7" y="249.8" width="137.79999999999995" height="1" fill="#fff" fill-opacity="0.12"/>
</g>
<text x="695.2" y="261.6" font-family="Liberation Sans" font-weight="bold" font-size="9" fill="#000" fill-opacity="0.6" textLength="104.1" lengthAdjust="spacingAndGlyphs">Gravel - Normals Strength</text>
<text x="694.7" y="260.8" font-family="Liberation Sans" font-weight="bold" font-size="9" fill="#d4d4d4" textLength="104.1" lengthAdjust="spacingAndGlyphs">Gravel - Normals Strength</text>
<text x="694.7" y="271.6" font-family="Liberation Sans" font-style="italic" font-size="8" fill="#a6c48a" textLength="35.1" lengthAdjust="spacingAndGlyphs">Param (4)</text>
<path d="M811.7 260.4L815.0 263.6L818.3 260.4" stroke="#e8e8e8" stroke-width="1.5" fill="none"/>
<text x="754.5" y="292.0" font-family="Liberation Sans" font-size="8.0" fill="#dcdcdc" text-anchor="end" textLength="47.4" lengthAdjust="spacingAndGlyphs">Default Value</text>
<rect x="758.5" y="283.8" width="17.8" height="12.0" fill="none" stroke="#d0d0d0" stroke-width="1"/>
<text x="767.4" y="293.0" font-family="Liberation Sans" font-size="8.6" fill="#d8d8d8" text-anchor="middle" textLength="12.0" lengthAdjust="spacingAndGlyphs">4.0</text>
<ellipse cx="809.3" cy="289.2" rx="3.95" ry="4.1" fill="#f0f0f0"/><path d="M813.70 287.30L815.90 289.20L813.70 291.10Z" fill="#f0f0f0"/>
<rect x="836.1" y="271.3" width="117.79999999999995" height="59.7" rx="5.5" fill="#000" fill-opacity="0.3"/>
<rect x="837.6" y="271.8" width="114.79999999999995" height="56.5" rx="4" fill="#121412" fill-opacity="0.84" stroke="#0c0c0c" stroke-opacity="0.8" stroke-width="1"/>
<g clip-path="url(#hc15)">
<rect x="837.6" y="271.8" width="114.79999999999995" height="15.099999999999966" fill="url(#hg15)" fill-opacity="0.92"/>
<rect x="837.6" y="271.8" width="114.79999999999995" height="15.099999999999966" fill="url(#hr15)"/>
<rect x="837.6" y="271.8" width="114.79999999999995" height="1" fill="#fff" fill-opacity="0.12"/>
</g>
<text x="847.1" y="283.4" font-family="Liberation Sans" font-weight="bold" font-size="9" fill="#000" fill-opacity="0.6" textLength="80.3" lengthAdjust="spacingAndGlyphs">MF_NormalStrength</text>
<text x="846.6" y="282.6" font-family="Liberation Sans" font-weight="bold" font-size="9" fill="#d4d4d4" textLength="80.3" lengthAdjust="spacingAndGlyphs">MF_NormalStrength</text>
<ellipse cx="847.6" cy="298.6" rx="3.95" ry="4.1" fill="#3a3b3a"/><path d="M852.00 296.70L854.20 298.60L852.00 300.50Z" fill="#2e2f2e"/>
<text x="858.0" y="301.5" font-family="Liberation Sans" font-size="8.0" fill="#dcdcdc" text-anchor="start" textLength="43.1" lengthAdjust="spacingAndGlyphs">Strength (S)</text>
<ellipse cx="847.6" cy="318.3" rx="3.95" ry="4.1" fill="#3a3b3a"/><path d="M852.00 316.40L854.20 318.30L852.00 320.20Z" fill="#2e2f2e"/>
<text x="858.0" y="321.2" font-family="Liberation Sans" font-size="8.0" fill="#dcdcdc" text-anchor="start" textLength="43.1" lengthAdjust="spacingAndGlyphs">Normal (V3)</text>
<ellipse cx="938.7" cy="298.6" rx="3.95" ry="4.1" fill="#f0f0f0"/><path d="M943.10 296.70L945.30 298.60L943.10 300.50Z" fill="#f0f0f0"/>
<text x="931.0" y="301.5" font-family="Liberation Sans" font-size="8.0" fill="#dcdcdc" text-anchor="end" textLength="22.7" lengthAdjust="spacingAndGlyphs">Result</text>
<rect x="424.9" y="541.0" width="94.20000000000005" height="45.7" rx="5.5" fill="#000" fill-opacity="0.3"/>
<rect x="426.4" y="541.5" width="91.20000000000005" height="42.5" rx="4" fill="#121412" fill-opacity="0.84" stroke="#0c0c0c" stroke-opacity="0.8" stroke-width="1"/>
<g clip-path="url(#hc16)">
<rect x="426.4" y="541.5" width="91.20000000000005" height="16.899999999999977" fill="url(#hg16)" fill-opacity="0.92"/>
<rect x="426.4" y="541.5" width="91.20000000000005" height="16.899999999999977" fill="url(#hr16)"/>
<rect x="426.4" y="541.5" width="91.20000000000005" height="1" fill="#fff" fill-opacity="0.12"/>
</g>
<text x="435.9" y="554.0" font-family="Liberation Sans" font-weight="bold" font-size="9" fill="#000" fill-opacity="0.6" textLength="11.7" lengthAdjust="spacingAndGlyphs">0.9</text>
<text x="435.4" y="553.2" font-family="Liberation Sans" font-weight="bold" font-size="9" fill="#d4d4d4" textLength="11.7" lengthAdjust="spacingAndGlyphs">0.9</text>
<path d="M506.2 547.9L509.5 551.1L512.8 547.9" stroke="#e8e8e8" stroke-width="1.5" fill="none"/>
<text x="468.0" y="572.5" font-family="Liberation Sans" font-size="8.0" fill="#dcdcdc" text-anchor="end" textLength="19.9" lengthAdjust="spacingAndGlyphs">Value</text>
<rect x="471.5" y="564.5" width="17.5" height="12.0" fill="none" stroke="#d0d0d0" stroke-width="1"/>
<text x="480.2" y="573.7" font-family="Liberation Sans" font-size="8.6" fill="#d8d8d8" text-anchor="middle" textLength="12.0" lengthAdjust="spacingAndGlyphs">0.9</text>
<ellipse cx="504" cy="569.5" rx="3.95" ry="4.1" fill="#f0f0f0"/><path d="M508.40 567.60L510.60 569.50L508.40 571.40Z" fill="#f0f0f0"/>
<rect x="562.7" y="520.0" width="67.19999999999993" height="62.40000000000005" rx="5.5" fill="#000" fill-opacity="0.3"/>
<rect x="564.2" y="520.5" width="64.19999999999993" height="59.200000000000045" rx="4" fill="#121412" fill-opacity="0.84" stroke="#0c0c0c" stroke-opacity="0.8" stroke-width="1"/>
<g clip-path="url(#hc17)">
<rect x="564.2" y="520.5" width="64.19999999999993" height="16.899999999999977" fill="url(#hg17)" fill-opacity="0.92"/>
<rect x="564.2" y="520.5" width="64.19999999999993" height="16.899999999999977" fill="url(#hr17)"/>
<rect x="564.2" y="520.5" width="64.19999999999993" height="1" fill="#fff" fill-opacity="0.12"/>
</g>
<text x="573.7" y="533.0" font-family="Liberation Sans" font-weight="bold" font-size="9" fill="#000" fill-opacity="0.6" textLength="31.7" lengthAdjust="spacingAndGlyphs">Multiply</text>
<text x="573.2" y="532.2" font-family="Liberation Sans" font-weight="bold" font-size="9" fill="#d4d4d4" textLength="31.7" lengthAdjust="spacingAndGlyphs">Multiply</text>
<path d="M617.2 527.4L620.5 530.6L623.8 527.4" stroke="#e8e8e8" stroke-width="1.5" fill="none"/>
<ellipse cx="575" cy="549.3" rx="3.95" ry="4.1" fill="#3a3b3a"/><path d="M579.40 547.40L581.60 549.30L579.40 551.20Z" fill="#2e2f2e"/>
<text x="584.0" y="552.2" font-family="Liberation Sans" font-size="8.0" fill="#dcdcdc" text-anchor="start" textLength="5.3" lengthAdjust="spacingAndGlyphs">A</text>
<ellipse cx="575" cy="568.9" rx="3.95" ry="4.1" fill="#3a3b3a"/><path d="M579.40 567.00L581.60 568.90L579.40 570.80Z" fill="#2e2f2e"/>
<text x="584.0" y="571.8" font-family="Liberation Sans" font-size="8.0" fill="#dcdcdc" text-anchor="start" textLength="5.3" lengthAdjust="spacingAndGlyphs">B</text>
<ellipse cx="615.5" cy="549.3" rx="3.95" ry="4.1" fill="#f0f0f0"/><path d="M619.90 547.40L622.10 549.30L619.90 551.20Z" fill="#f0f0f0"/>
<rect x="533.0" y="595.0" width="94.20000000000005" height="45.800000000000026" rx="5.5" fill="#000" fill-opacity="0.3"/>
<rect x="534.5" y="595.5" width="91.20000000000005" height="42.60000000000002" rx="4" fill="#121412" fill-opacity="0.84" stroke="#0c0c0c" stroke-opacity="0.8" stroke-width="1"/>
<g clip-path="url(#hc18)">
<rect x="534.5" y="595.5" width="91.20000000000005" height="16.899999999999977" fill="url(#hg18)" fill-opacity="0.92"/>
<rect x="534.5" y="595.5" width="91.20000000000005" height="16.899999999999977" fill="url(#hr18)"/>
<rect x="534.5" y="595.5" width="91.20000000000005" height="1" fill="#fff" fill-opacity="0.12"/>
</g>
<text x="544.0" y="608.0" font-family="Liberation Sans" font-weight="bold" font-size="9" fill="#000" fill-opacity="0.6" textLength="4.7" lengthAdjust="spacingAndGlyphs">4</text>
<text x="543.5" y="607.2" font-family="Liberation Sans" font-weight="bold" font-size="9" fill="#d4d4d4" textLength="4.7" lengthAdjust="spacingAndGlyphs">4</text>
<path d="M614.2 601.9L617.5 605.1L620.8 601.9" stroke="#e8e8e8" stroke-width="1.5" fill="none"/>
<text x="576.0" y="627.5" font-family="Liberation Sans" font-size="8.0" fill="#dcdcdc" text-anchor="end" textLength="19.9" lengthAdjust="spacingAndGlyphs">Value</text>
<rect x="579.5" y="619.0" width="17.5" height="12.0" fill="none" stroke="#d0d0d0" stroke-width="1"/>
<text x="588.2" y="628.2" font-family="Liberation Sans" font-size="8.6" fill="#d8d8d8" text-anchor="middle" textLength="12.0" lengthAdjust="spacingAndGlyphs">4.0</text>
<ellipse cx="612.5" cy="624.3" rx="3.95" ry="4.1" fill="#f0f0f0"/><path d="M616.90 622.40L619.10 624.30L616.90 626.20Z" fill="#f0f0f0"/>
<rect x="648.8" y="564.6" width="118.60000000000002" height="59.300000000000026" rx="5.5" fill="#000" fill-opacity="0.3"/>
<rect x="650.3" y="565.1" width="115.60000000000002" height="56.10000000000002" rx="4" fill="#121412" fill-opacity="0.84" stroke="#0c0c0c" stroke-opacity="0.8" stroke-width="1"/>
<g clip-path="url(#hc19)">
<rect x="650.3" y="565.1" width="115.60000000000002" height="15.199999999999932" fill="url(#hg19)" fill-opacity="0.92"/>
<rect x="650.3" y="565.1" width="115.60000000000002" height="15.199999999999932" fill="url(#hr19)"/>
<rect x="650.3" y="565.1" width="115.60000000000002" height="1" fill="#fff" fill-opacity="0.12"/>
</g>
<text x="659.8" y="576.7" font-family="Liberation Sans" font-weight="bold" font-size="9" fill="#000" fill-opacity="0.6" textLength="60.2" lengthAdjust="spacingAndGlyphs">CheapContrast</text>
<text x="659.3" y="575.9" font-family="Liberation Sans" font-weight="bold" font-size="9" fill="#d4d4d4" textLength="60.2" lengthAdjust="spacingAndGlyphs">CheapContrast</text>
<ellipse cx="662.2" cy="591.5" rx="3.95" ry="4.1" fill="#f0f0f0"/><path d="M666.60 589.60L668.80 591.50L666.60 593.40Z" fill="#f0f0f0"/>
<text x="671.0" y="594.4" font-family="Liberation Sans" font-size="8.0" fill="#dcdcdc" text-anchor="start" textLength="19.6" lengthAdjust="spacingAndGlyphs">In (S)</text>
<ellipse cx="662.2" cy="610.4" rx="3.95" ry="4.1" fill="#3a3b3a"/><path d="M666.60 608.50L668.80 610.40L666.60 612.30Z" fill="#2e2f2e"/>
<text x="671.0" y="613.3" font-family="Liberation Sans" font-size="8.0" fill="#dcdcdc" text-anchor="start" textLength="43.1" lengthAdjust="spacingAndGlyphs">Contrast (S)</text>
<ellipse cx="752.4" cy="591.5" rx="3.95" ry="4.1" fill="#f0f0f0"/><path d="M756.80 589.60L759.00 591.50L756.80 593.40Z" fill="#f0f0f0"/>
<text x="744.5" y="594.4" font-family="Liberation Sans" font-size="8.0" fill="#dcdcdc" text-anchor="end" textLength="22.7" lengthAdjust="spacingAndGlyphs">Result</text>
<rect x="767.8" y="564.0" width="90.10000000000002" height="41.99999999999996" rx="5.5" fill="#000" fill-opacity="0.3"/>
<rect x="769.3" y="564.5" width="87.10000000000002" height="38.799999999999955" rx="4" fill="#121412" fill-opacity="0.84" stroke="#0c0c0c" stroke-opacity="0.8" stroke-width="1"/>
<g clip-path="url(#hc20)">
<rect x="769.3" y="564.5" width="87.10000000000002" height="15.799999999999955" fill="url(#hg20)" fill-opacity="0.92"/>
<rect x="769.3" y="564.5" width="87.10000000000002" height="15.799999999999955" fill="url(#hr20)"/>
<rect x="769.3" y="564.5" width="87.10000000000002" height="1" fill="#fff" fill-opacity="0.12"/>
</g>
<text x="778.8" y="576.4" font-family="Liberation Sans" font-weight="bold" font-size="9" fill="#000" fill-opacity="0.6" textLength="56.0" lengthAdjust="spacingAndGlyphs">Output Height</text>
<text x="778.3" y="575.6" font-family="Liberation Sans" font-weight="bold" font-size="9" fill="#d4d4d4" textLength="56.0" lengthAdjust="spacingAndGlyphs">Output Height</text>
<path d="M844.7 570.9L848.0 574.1L851.3 570.9" stroke="#e8e8e8" stroke-width="1.5" fill="none"/>
<ellipse cx="781.1" cy="592.2" rx="3.95" ry="4.1" fill="#f0f0f0"/><path d="M785.50 590.30L787.70 592.20L785.50 594.10Z" fill="#f0f0f0"/>
<ellipse cx="844.6" cy="592.2" rx="3.3" ry="3.45" fill="#101010" stroke="#f0f0f0" stroke-width="1.35"/><path d="M849.00 590.30L851.20 592.20L849.00 594.10Z" fill="#f0f0f0"/>
<rect x="1009.0" y="541.8" width="115.59999999999991" height="92.90000000000005" rx="5.5" fill="#000" fill-opacity="0.3"/>
<rect x="1010.5" y="542.3" width="112.59999999999991" height="89.70000000000005" rx="4" fill="#121412" fill-opacity="0.84" stroke="#0c0c0c" stroke-opacity="0.8" stroke-width="1"/>
<g clip-path="url(#hc21)">
<rect x="1010.5" y="542.3" width="112.59999999999991" height="25.40000000000009" fill="url(#hg21)" fill-opacity="0.92"/>
<rect x="1010.5" y="542.3" width="112.59999999999991" height="25.40000000000009" fill="url(#hr21)"/>
<rect x="1010.5" y="542.3" width="112.59999999999991" height="1" fill="#fff" fill-opacity="0.12"/>
</g>
<text x="1020.0" y="554.1" font-family="Liberation Sans" font-weight="bold" font-size="9" fill="#000" fill-opacity="0.6" textLength="51.4" lengthAdjust="spacingAndGlyphs">DisplaceMap</text>
<text x="1019.5" y="553.3" font-family="Liberation Sans" font-weight="bold" font-size="9" fill="#d4d4d4" textLength="51.4" lengthAdjust="spacingAndGlyphs">DisplaceMap</text>
<text x="1019.5" y="564.1" font-family="Liberation Sans" font-style="italic" font-size="8" fill="#8ab8a8" textLength="75.5" lengthAdjust="spacingAndGlyphs">Switch Param (False)</text>
<ellipse cx="1020.7" cy="579.5" rx="3.95" ry="4.1" fill="#f0f0f0"/><path d="M1025.10 577.60L1027.30 579.50L1025.10 581.40Z" fill="#f0f0f0"/>
<text x="1030.5" y="582.4" font-family="Liberation Sans" font-size="8.0" fill="#dcdcdc" text-anchor="start" textLength="16.2" lengthAdjust="spacingAndGlyphs">True</text>
<ellipse cx="1020.7" cy="599.2" rx="3.95" ry="4.1" fill="#f0f0f0"/><path d="M1025.10 597.30L1027.30 599.20L1025.10 601.10Z" fill="#f0f0f0"/>
<text x="1030.5" y="602.1" font-family="Liberation Sans" font-size="8.0" fill="#dcdcdc" text-anchor="start" textLength="19.6" lengthAdjust="spacingAndGlyphs">False</text>
<ellipse cx="1109.8" cy="579.5" rx="3.95" ry="4.1" fill="#f0f0f0"/><path d="M1114.20 577.60L1116.40 579.50L1114.20 581.40Z" fill="#f0f0f0"/>
<text x="1078.5" y="623.0" font-family="Liberation Sans" font-size="8.0" fill="#dcdcdc" text-anchor="end" textLength="47.4" lengthAdjust="spacingAndGlyphs">Default Value</text>
<rect x="1082.7" y="614.5" width="11.2" height="11.1" fill="#151515" stroke="#666" stroke-width="0.6"/>
<rect x="231.3" y="649.8" width="130.09999999999997" height="103.30000000000003" rx="5.5" fill="#000" fill-opacity="0.3"/>
<rect x="232.8" y="650.3" width="127.09999999999997" height="100.10000000000002" rx="4" fill="#121412" fill-opacity="0.84" stroke="#0c0c0c" stroke-opacity="0.8" stroke-width="1"/>
<g clip-path="url(#hc22)">
<rect x="232.8" y="650.3" width="127.09999999999997" height="25.600000000000023" fill="url(#hg22)" fill-opacity="0.92"/>
<rect x="232.8" y="650.3" width="127.09999999999997" height="25.600000000000023" fill="url(#hr22)"/>
<rect x="232.8" y="650.3" width="127.09999999999997" height="1" fill="#fff" fill-opacity="0.12"/>
</g>
<text x="242.3" y="662.1" font-family="Liberation Sans" font-weight="bold" font-size="9" fill="#000" fill-opacity="0.6" textLength="97.4" lengthAdjust="spacingAndGlyphs">Absolute World Position</text>
<text x="241.8" y="661.3" font-family="Liberation Sans" font-weight="bold" font-size="9" fill="#d4d4d4" textLength="97.4" lengthAdjust="spacingAndGlyphs">Absolute World Position</text>
<text x="241.8" y="672.1" font-family="Liberation Sans" font-style="italic" font-size="8" fill="#c47a50" textLength="36.5" lengthAdjust="spacingAndGlyphs">Input Data</text>
<path d="M348.7 660.4L352.0 663.6L355.3 660.4" stroke="#e8e8e8" stroke-width="1.5" fill="none"/>
<ellipse cx="347.6" cy="687.5" rx="3.95" ry="4.1" fill="#f0f0f0"/><path d="M352.00 685.60L354.20 687.50L352.00 689.40Z" fill="#f0f0f0"/>
<text x="340.0" y="690.4" font-family="Liberation Sans" font-size="8.0" fill="#dcdcdc" text-anchor="end" textLength="15.6" lengthAdjust="spacingAndGlyphs">XYZ</text>
<ellipse cx="347.6" cy="707.3" rx="3.3" ry="3.45" fill="#101010" stroke="#f0f0f0" stroke-width="1.35"/><path d="M352.00 705.40L354.20 707.30L352.00 709.20Z" fill="#f0f0f0"/>
<text x="340.0" y="710.2" font-family="Liberation Sans" font-size="8.0" fill="#dcdcdc" text-anchor="end" textLength="10.7" lengthAdjust="spacingAndGlyphs">XY</text>
<ellipse cx="347.6" cy="726.8" rx="3.3" ry="3.45" fill="#101010" stroke="#1a1ae6" stroke-width="1.35"/><path d="M352.00 724.90L354.20 726.80L352.00 728.70Z" fill="#1a1ae6"/>
<text x="340.0" y="729.7" font-family="Liberation Sans" font-size="8.0" fill="#dcdcdc" text-anchor="end" textLength="4.9" lengthAdjust="spacingAndGlyphs">Z</text>
<path d="M293.7 741.6L297.0 744.9L300.3 741.6" stroke="#e8e8e8" stroke-width="1.5" fill="none"/>
<rect x="382.0" y="660.0" width="83.39999999999998" height="53.800000000000026" rx="5.5" fill="#000" fill-opacity="0.3"/>
<rect x="383.5" y="660.5" width="80.39999999999998" height="50.60000000000002" rx="4" fill="#121412" fill-opacity="0.84" stroke="#0c0c0c" stroke-opacity="0.8" stroke-width="1"/>
<g clip-path="url(#hc23)">
<rect x="383.5" y="660.5" width="80.39999999999998" height="15.5" fill="url(#hg23)" fill-opacity="0.92"/>
<rect x="383.5" y="660.5" width="80.39999999999998" height="15.5" fill="url(#hr23)"/>
<rect x="383.5" y="660.5" width="80.39999999999998" height="1" fill="#fff" fill-opacity="0.12"/>
</g>
<text x="393.0" y="672.2" font-family="Liberation Sans" font-weight="bold" font-size="9" fill="#000" fill-opacity="0.6" textLength="48.5" lengthAdjust="spacingAndGlyphs">Mask ( R G )</text>
<text x="392.5" y="671.5" font-family="Liberation Sans" font-weight="bold" font-size="9" fill="#d4d4d4" textLength="48.5" lengthAdjust="spacingAndGlyphs">Mask ( R G )</text>
<path d="M452.7 666.9L456.0 670.1L459.3 666.9" stroke="#e8e8e8" stroke-width="1.5" fill="none"/>
<ellipse cx="394.6" cy="687.8" rx="3.95" ry="4.1" fill="#f0f0f0"/><path d="M399.00 685.90L401.20 687.80L399.00 689.70Z" fill="#f0f0f0"/>
<ellipse cx="452.3" cy="687.8" rx="3.95" ry="4.1" fill="#f0f0f0"/><path d="M456.70 685.90L458.90 687.80L456.70 689.70Z" fill="#f0f0f0"/>
<path d="M421.3 702.6L424.6 705.9L427.9 702.6" stroke="#e8e8e8" stroke-width="1.5" fill="none"/>
<rect x="489.9" y="670.3" width="66.60000000000002" height="61.50000000000007" rx="5.5" fill="#000" fill-opacity="0.3"/>
<rect x="491.4" y="670.8" width="63.60000000000002" height="58.30000000000007" rx="4" fill="#121412" fill-opacity="0.84" stroke="#0c0c0c" stroke-opacity="0.8" stroke-width="1"/>
<g clip-path="url(#hc24)">
<rect x="491.4" y="670.8" width="63.60000000000002" height="16.200000000000045" fill="url(#hg24)" fill-opacity="0.92"/>
<rect x="491.4" y="670.8" width="63.60000000000002" height="16.200000000000045" fill="url(#hr24)"/>
<rect x="491.4" y="670.8" width="63.60000000000002" height="1" fill="#fff" fill-opacity="0.12"/>
</g>
<text x="500.9" y="682.9" font-family="Liberation Sans" font-weight="bold" font-size="9" fill="#000" fill-opacity="0.6" textLength="31.7" lengthAdjust="spacingAndGlyphs">Multiply</text>
<text x="500.4" y="682.1" font-family="Liberation Sans" font-weight="bold" font-size="9" fill="#d4d4d4" textLength="31.7" lengthAdjust="spacingAndGlyphs">Multiply</text>
<path d="M543.7 677.4L547.0 680.6L550.3 677.4" stroke="#e8e8e8" stroke-width="1.5" fill="none"/>
<ellipse cx="502.4" cy="698.8" rx="3.95" ry="4.1" fill="#3a3b3a"/><path d="M506.80 696.90L509.00 698.80L506.80 700.70Z" fill="#2e2f2e"/>
<text x="511.0" y="701.7" font-family="Liberation Sans" font-size="8.0" fill="#dcdcdc" text-anchor="start" textLength="5.3" lengthAdjust="spacingAndGlyphs">A</text>
<ellipse cx="502.4" cy="718.3" rx="3.95" ry="4.1" fill="#3a3b3a"/><path d="M506.80 716.40L509.00 718.30L506.80 720.20Z" fill="#2e2f2e"/>
<text x="511.0" y="721.2" font-family="Liberation Sans" font-size="8.0" fill="#dcdcdc" text-anchor="start" textLength="5.3" lengthAdjust="spacingAndGlyphs">B</text>
<ellipse cx="543" cy="698.8" rx="3.95" ry="4.1" fill="#f0f0f0"/><path d="M547.40 696.90L549.60 698.80L547.40 700.70Z" fill="#f0f0f0"/>
<rect x="328.9" y="767.9" width="130.10000000000002" height="64.80000000000003" rx="5.5" fill="#000" fill-opacity="0.3"/>
<rect x="330.4" y="768.4" width="127.10000000000002" height="61.60000000000002" rx="4" fill="#121412" fill-opacity="0.84" stroke="#0c0c0c" stroke-opacity="0.8" stroke-width="1"/>
<g clip-path="url(#hc25)">
<rect x="330.4" y="768.4" width="127.10000000000002" height="26.399999999999977" fill="url(#hg25)" fill-opacity="0.92"/>
<rect x="330.4" y="768.4" width="127.10000000000002" height="26.399999999999977" fill="url(#hr25)"/>
<rect x="330.4" y="768.4" width="127.10000000000002" height="1" fill="#fff" fill-opacity="0.12"/>
</g>
<text x="339.9" y="780.2" font-family="Liberation Sans" font-weight="bold" font-size="9" fill="#000" fill-opacity="0.6" textLength="78.3" lengthAdjust="spacingAndGlyphs">Displace - UV Tiling</text>
<text x="339.4" y="779.4" font-family="Liberation Sans" font-weight="bold" font-size="9" fill="#d4d4d4" textLength="78.3" lengthAdjust="spacingAndGlyphs">Displace - UV Tiling</text>
<text x="339.4" y="790.2" font-family="Liberation Sans" font-style="italic" font-size="8" fill="#a6c48a" textLength="50.5" lengthAdjust="spacingAndGlyphs">Param (0.003)</text>
<path d="M446.7 779.4L450.0 782.6L453.3 779.4" stroke="#e8e8e8" stroke-width="1.5" fill="none"/>
<text x="398.0" y="811.0" font-family="Liberation Sans" font-size="8.0" fill="#dcdcdc" text-anchor="end" textLength="47.4" lengthAdjust="spacingAndGlyphs">Default Value</text>
<rect x="402.0" y="802.8" width="27.3" height="11.3" fill="none" stroke="#d0d0d0" stroke-width="1"/>
<text x="415.6" y="811.7" font-family="Liberation Sans" font-size="8.6" fill="#d8d8d8" text-anchor="middle" textLength="21.5" lengthAdjust="spacingAndGlyphs">0.003</text>
<ellipse cx="445.2" cy="806.1" rx="3.95" ry="4.1" fill="#f0f0f0"/><path d="M449.60 804.20L451.80 806.10L449.60 808.00Z" fill="#f0f0f0"/>
<rect x="587.7" y="660.2" width="139.79999999999995" height="172.49999999999994" rx="5.5" fill="#000" fill-opacity="0.3"/>
<rect x="589.2" y="660.7" width="136.79999999999995" height="169.29999999999995" rx="4" fill="#121412" fill-opacity="0.84" stroke="#0c0c0c" stroke-opacity="0.8" stroke-width="1"/>
<g clip-path="url(#hc26)">
<rect x="589.2" y="660.7" width="136.79999999999995" height="25.5" fill="url(#hg26)" fill-opacity="0.92"/>
<rect x="589.2" y="660.7" width="136.79999999999995" height="25.5" fill="url(#hr26)"/>
<rect x="589.2" y="660.7" width="136.79999999999995" height="1" fill="#fff" fill-opacity="0.12"/>
<rect x="589.2" y="806" width="136.79999999999995" height="24" fill="#000" fill-opacity="0.25"/>
</g>
<text x="598.7" y="672.5" font-family="Liberation Sans" font-weight="bold" font-size="9" fill="#000" fill-opacity="0.6" textLength="55.6" lengthAdjust="spacingAndGlyphs">DisplaceExtra</text>
<text x="598.2" y="671.7" font-family="Liberation Sans" font-weight="bold" font-size="9" fill="#d4d4d4" textLength="55.6" lengthAdjust="spacingAndGlyphs">DisplaceExtra</text>
<text x="598.2" y="682.5" font-family="Liberation Sans" font-style="italic" font-size="8" fill="#7fb3a8" textLength="33.4" lengthAdjust="spacingAndGlyphs">Param2D</text>
<path d="M714.2 673.6L717.5 670.4L720.8 673.6" stroke="#e8e8e8" stroke-width="1.5" fill="none"/>
<ellipse cx="600" cy="698.4" rx="3.95" ry="4.1" fill="#3a3b3a"/><path d="M604.40 696.50L606.60 698.40L604.40 700.30Z" fill="#2e2f2e"/>
<text x="609.0" y="701.3" font-family="Liberation Sans" font-size="8.0" fill="#dcdcdc" text-anchor="start" textLength="15.1" lengthAdjust="spacingAndGlyphs">UVs</text>
<ellipse cx="600" cy="717.8" rx="3.4" ry="3.5" fill="#111" stroke="#2c2c2c" stroke-width="1.2"/><path d="M604.40 715.90L606.60 717.80L604.40 719.70Z" fill="#262626"/>
<text x="609.0" y="720.7" font-family="Liberation Sans" font-size="8.0" fill="#dcdcdc" text-anchor="start" textLength="70.1" lengthAdjust="spacingAndGlyphs">Apply View MipBias</text>
<ellipse cx="713.3" cy="698.4" rx="3.3" ry="3.45" fill="#101010" stroke="#f0f0f0" stroke-width="1.35"/><path d="M717.70 696.50L719.90 698.40L717.70 700.30Z" fill="#f0f0f0"/>
<text x="705.5" y="701.3" font-family="Liberation Sans" font-size="8.0" fill="#dcdcdc" text-anchor="end" textLength="17.3" lengthAdjust="spacingAndGlyphs">RGB</text>
<ellipse cx="713.3" cy="717.8" rx="3.95" ry="4.1" fill="#f01010"/><path d="M717.70 715.90L719.90 717.80L717.70 719.70Z" fill="#f01010"/>
<text x="705.5" y="720.7" font-family="Liberation Sans" font-size="8.0" fill="#dcdcdc" text-anchor="end" textLength="5.8" lengthAdjust="spacingAndGlyphs">R</text>
<ellipse cx="713.3" cy="737.8" rx="3.3" ry="3.45" fill="#101010" stroke="#10d010" stroke-width="1.35"/><path d="M717.70 735.90L719.90 737.80L717.70 739.70Z" fill="#10d010"/>
<text x="705.5" y="740.7" font-family="Liberation Sans" font-size="8.0" fill="#dcdcdc" text-anchor="end" textLength="6.2" lengthAdjust="spacingAndGlyphs">G</text>
<ellipse cx="713.3" cy="757.5" rx="3.3" ry="3.45" fill="#101010" stroke="#1010e0" stroke-width="1.35"/><path d="M717.70 755.60L719.90 757.50L717.70 759.40Z" fill="#1010e0"/>
<text x="705.5" y="760.4" font-family="Liberation Sans" font-size="8.0" fill="#dcdcdc" text-anchor="end" textLength="5.3" lengthAdjust="spacingAndGlyphs">B</text>
<ellipse cx="713.3" cy="777.7" rx="3.3" ry="3.45" fill="#101010" stroke="#f0f0f0" stroke-width="1.35"/><path d="M717.70 775.80L719.90 777.70L717.70 779.60Z" fill="#f0f0f0"/>
<text x="705.5" y="780.6" font-family="Liberation Sans" font-size="8.0" fill="#dcdcdc" text-anchor="end" textLength="5.3" lengthAdjust="spacingAndGlyphs">A</text>
<ellipse cx="713.3" cy="797.4" rx="3.3" ry="3.45" fill="#101010" stroke="#f0f0f0" stroke-width="1.35"/><path d="M717.70 795.50L719.90 797.40L717.70 799.30Z" fill="#f0f0f0"/>
<text x="705.5" y="800.3" font-family="Liberation Sans" font-size="8.0" fill="#dcdcdc" text-anchor="end" textLength="22.7" lengthAdjust="spacingAndGlyphs">RGBA</text>
<path d="M654.5 811.6L657.8 814.9L661.1 811.6" stroke="#e8e8e8" stroke-width="1.5" fill="none"/>
<rect x="836.3" y="670.6" width="66.30000000000007" height="61.399999999999935" rx="5.5" fill="#000" fill-opacity="0.3"/>
<rect x="837.8" y="671.1" width="63.30000000000007" height="58.19999999999993" rx="4" fill="#121412" fill-opacity="0.84" stroke="#0c0c0c" stroke-opacity="0.8" stroke-width="1"/>
<g clip-path="url(#hc27)">
<rect x="837.8" y="671.1" width="63.30000000000007" height="15.600000000000023" fill="url(#hg27)" fill-opacity="0.92"/>
<rect x="837.8" y="671.1" width="63.30000000000007" height="15.600000000000023" fill="url(#hr27)"/>
<rect x="837.8" y="671.1" width="63.30000000000007" height="1" fill="#fff" fill-opacity="0.12"/>
</g>
<text x="847.3" y="682.9" font-family="Liberation Sans" font-weight="bold" font-size="9" fill="#000" fill-opacity="0.6" textLength="31.7" lengthAdjust="spacingAndGlyphs">Multiply</text>
<text x="846.8" y="682.1" font-family="Liberation Sans" font-weight="bold" font-size="9" fill="#d4d4d4" textLength="31.7" lengthAdjust="spacingAndGlyphs">Multiply</text>
<path d="M889.7 677.9L893.0 681.1L896.3 677.9" stroke="#e8e8e8" stroke-width="1.5" fill="none"/>
<ellipse cx="847.6" cy="698.9" rx="3.95" ry="4.1" fill="#3a3b3a"/><path d="M852.00 697.00L854.20 698.90L852.00 700.80Z" fill="#2e2f2e"/>
<text x="857.0" y="701.8" font-family="Liberation Sans" font-size="8.0" fill="#dcdcdc" text-anchor="start" textLength="5.3" lengthAdjust="spacingAndGlyphs">A</text>
<ellipse cx="847.6" cy="718.3" rx="3.95" ry="4.1" fill="#3a3b3a"/><path d="M852.00 716.40L854.20 718.30L852.00 720.20Z" fill="#2e2f2e"/>
<text x="857.0" y="721.2" font-family="Liberation Sans" font-size="8.0" fill="#dcdcdc" text-anchor="start" textLength="5.3" lengthAdjust="spacingAndGlyphs">B</text>
<ellipse cx="887.7" cy="698.9" rx="3.95" ry="4.1" fill="#f0f0f0"/><path d="M892.10 697.00L894.30 698.90L892.10 700.80Z" fill="#f0f0f0"/>
<rect x="749.6" y="745.3" width="121.1" height="54.6" rx="5.5" fill="none" stroke="url(#selg)" stroke-width="2.6"/>
<rect x="749.9" y="746.3" width="120.70000000000005" height="54.300000000000026" rx="5.5" fill="#000" fill-opacity="0.3"/>
<rect x="751.4" y="746.8" width="117.70000000000005" height="51.10000000000002" rx="4" fill="#121412" fill-opacity="0.84" stroke="#0c0c0c" stroke-opacity="0.8" stroke-width="1"/>
<g clip-path="url(#hc28)">
<rect x="751.4" y="746.8" width="117.70000000000005" height="26.0" fill="url(#hg28)" fill-opacity="0.92"/>
<rect x="751.4" y="746.8" width="117.70000000000005" height="26.0" fill="url(#hr28)"/>
<rect x="751.4" y="746.8" width="117.70000000000005" height="1" fill="#fff" fill-opacity="0.12"/>
</g>
<text x="760.9" y="758.6" font-family="Liberation Sans" font-weight="bold" font-size="9" fill="#000" fill-opacity="0.6" textLength="67.2" lengthAdjust="spacingAndGlyphs">Displace - Power</text>
<text x="760.4" y="757.8" font-family="Liberation Sans" font-weight="bold" font-size="9" fill="#d4d4d4" textLength="67.2" lengthAdjust="spacingAndGlyphs">Displace - Power</text>
<text x="760.4" y="768.6" font-family="Liberation Sans" font-style="italic" font-size="8" fill="#a6c48a" textLength="35.1" lengthAdjust="spacingAndGlyphs">Param (1)</text>
<path d="M858.2 758.1L861.5 761.4L864.8 758.1" stroke="#e8e8e8" stroke-width="1.5" fill="none"/>
<text x="819.5" y="788.2" font-family="Liberation Sans" font-size="8.0" fill="#dcdcdc" text-anchor="end" textLength="47.4" lengthAdjust="spacingAndGlyphs">Default Value</text>
<rect x="823.7" y="780.9" width="17.8" height="12.3" fill="none" stroke="#d0d0d0" stroke-width="1"/>
<text x="832.6" y="790.2" font-family="Liberation Sans" font-size="8.6" fill="#d8d8d8" text-anchor="middle" textLength="12.0" lengthAdjust="spacingAndGlyphs">1.0</text>
<ellipse cx="855.6" cy="785.2" rx="3.95" ry="4.1" fill="#f0f0f0"/><path d="M860.00 783.30L862.20 785.20L860.00 787.10Z" fill="#f0f0f0"/>
<rect x="399" y="115.6" width="65" height="65.4" fill="#c4704e" filter="url(#fgravel)"/>
<rect x="399" y="364.6" width="65.2" height="65.1" fill="#d9d9d6" filter="url(#fnormal)"/>
<rect x="592.9" y="731.2" width="64.2" height="63.8" fill="#9a3cb8" filter="url(#fdisp)"/>
</svg>
</body></html>
